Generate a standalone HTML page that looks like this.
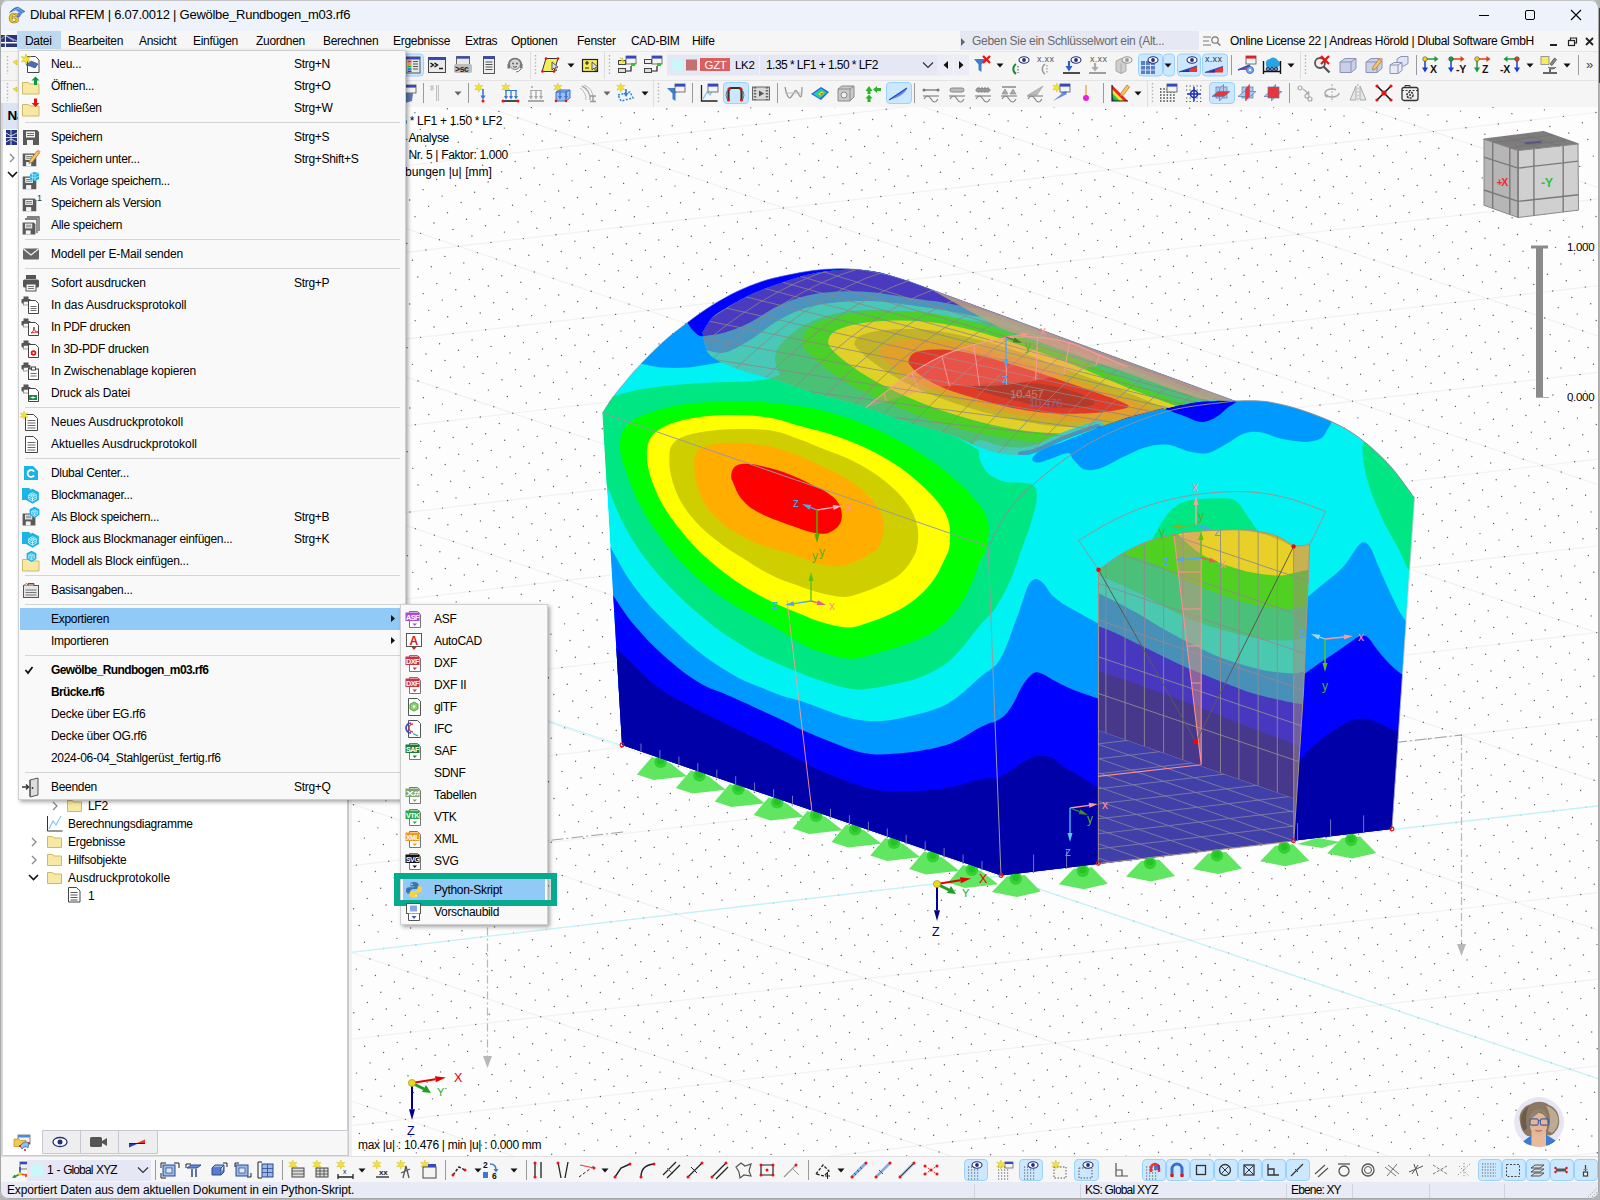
<!DOCTYPE html>
<html><head><meta charset="utf-8"><title>Dlubal RFEM</title>
<style>
*{box-sizing:border-box;margin:0;padding:0}
html,body{width:1600px;height:1200px;overflow:hidden}
body{font-family:"Liberation Sans",sans-serif;font-size:12px;letter-spacing:-.3px;color:#000;background:#f0f0f0;position:relative}
.abs{position:absolute}
#title{left:0;top:0;width:1600px;height:31px;background:#eef3fb}
#title .t{left:30px;top:7px;font-size:13px;letter-spacing:-.26px;white-space:nowrap}
#menubar{left:0;top:31px;width:1600px;height:20px;background:#f6f6f6}
#menubar span{position:absolute;top:3px;white-space:nowrap;font-size:12px}
#tb1{left:0;top:51px;width:1600px;height:29px;background:#f5f5f5;border-top:1px solid #e6e6e6}
#tb2{left:0;top:80px;width:1600px;height:27px;background:#f5f5f5;border-top:1px solid #e4e4e4}
#panel{left:0;top:103px;width:349px;height:1054px;background:#fff;border-left:3px solid #d6d6d6;border-right:2px solid #c9c9c9}
#panelhead{left:3px;top:103px;width:344px;height:26px;background:#dbe5f4}
#view{left:352px;top:107px;width:1246px;height:1049px;background:#fdfdfd;overflow:hidden}
#btb{left:0;top:1156px;width:1600px;height:26px;background:#f6f6f6;border-top:1px solid #e0e0e0}
#status{left:0;top:1182px;width:1600px;height:18px;background:#e8eaf5}
#frame{left:0;top:0;width:1599px;height:1199px;border:1px solid #a8a8a8;border-top-color:#c4c4c4;border-radius:8px;box-shadow:0 0 0 12px #b4b4b4;pointer-events:none;z-index:50}
#status span{position:absolute;top:1px;white-space:nowrap;font-size:12px;letter-spacing:-.14px}
.tree{position:absolute;white-space:nowrap;font-size:12px}
.menu{position:absolute;background:#f9f9f9;border:1px solid #cfcfcf;box-shadow:2px 2px 4px rgba(0,0,0,.35)}
.mi{position:absolute;left:0;height:22px;line-height:22px;white-space:nowrap;font-size:12px}
.mi .l{position:absolute;left:31px;top:0}
.mi .s{position:absolute;left:274px;top:0}
.sep{position:absolute;height:1px;background:#d4d4d4}
.b{font-weight:bold;letter-spacing:-.62px}
</style></head><body>
<div id="title" class="abs">
<svg class="abs" style="left:6px;top:4px" width="22" height="22" viewBox="0 0 22 22"><path d="M3.5 8.5Q7 3.5 12 3l7 4.5q-4 1-6 6l-2.5-1q1-3 3-4.5L10 6Q6 7 3.5 8.5z" fill="#3f7fd6" stroke="#2a5aa8" stroke-width=".5"/><path d="M8 5.5l7 4M11 4l6 4.2M6.5 7q4-2 7-2.5" stroke="#9cc4f0" stroke-width=".6" fill="none"/><text transform="translate(2.8,18.6) scale(1.250,1)" font-size="15" font-weight="bold" letter-spacing="0" fill="#f6d02c" stroke="#9c7e12" stroke-width=".6" font-family="Liberation Sans">6</text></svg>
<div class="abs t">Dlubal RFEM | 6.07.0012 | Gewölbe_Rundbogen_m03.rf6</div>
<svg class="abs" style="left:1470px;top:0" width="130" height="30"><path d="M9 15.5h10" stroke="#000" stroke-width="1"/><rect x="55.5" y="10.5" width="9" height="9" fill="none" stroke="#000" rx="1.5"/><path d="M101 10l10 10M111 10l-10 10" stroke="#000" stroke-width="1.1"/></svg>
</div>
<div id="menubar" class="abs">
<svg class="abs" style="left:0;top:4px" width="17" height="12"><rect x="1" width="16" height="12" fill="#27357e"/><path d="M1 7.7h16" stroke="#fff" stroke-width="1.5"/><path d="M5.4 0v12" stroke="#fff" stroke-width="1"/><path d="M1 4.5L5 .5M6 1l11 5M6 .5l8 5.5" stroke="#cfd6ee" stroke-width=".8" fill="none"/></svg>
<div class="abs" style="left:17px;top:0;width:44px;height:18px;background:#bdd9f0"></div>
<span style="left:25px">Datei</span>
<span style="left:68px">Bearbeiten</span>
<span style="left:139px">Ansicht</span>
<span style="left:193px">Einfügen</span>
<span style="left:256px">Zuordnen</span>
<span style="left:323px">Berechnen</span>
<span style="left:393px">Ergebnisse</span>
<span style="left:465px">Extras</span>
<span style="left:511px">Optionen</span>
<span style="left:577px">Fenster</span>
<span style="left:631px">CAD-BIM</span>
<span style="left:692px">Hilfe</span>
<div class="abs" style="left:960px;top:0;width:239px;height:19px;background:#e6e9f4"></div>
<svg class="abs" style="left:960px;top:6px" width="8" height="10"><path d="M1 1l4 4-4 4z" fill="#666"/></svg>
<span style="left:972px;color:#6a6a6a">Geben Sie ein Schlüsselwort ein (Alt...</span>
<svg class="abs" style="left:1202px;top:3px" width="20" height="15"><path d="M1 3h8M1 7h6M1 11h8" stroke="#777" stroke-width="1.2"/><circle cx="13" cy="6" r="3.2" fill="none" stroke="#777" stroke-width="1.2"/><path d="M15.3 8.5l3 3" stroke="#777" stroke-width="1.4"/></svg>
<span style="left:1230px">Online License 22 | Andreas Hörold | Dlubal Software GmbH</span>
<svg class="abs" style="left:1545px;top:2px" width="55" height="18"><path d="M5 12h7" stroke="#222" stroke-width="2"/><rect x="23.5" y="7.5" width="6" height="5" fill="none" stroke="#222" stroke-width="1.2"/><path d="M25.5 7V5h6v5h-2" fill="none" stroke="#222" stroke-width="1.2"/><path d="M41 5l7 7M48 5l-7 7" stroke="#222" stroke-width="1.8"/></svg>
</div>
<div id="tb1" class="abs"></div><div id="tb2" class="abs"></div>
<div id="panel" class="abs"></div><div id="panelhead" class="abs"><span class="abs" style="left:4.5px;top:5px;font-weight:bold;font-size:13.5px">Navigator - Daten</span></div>
<div id="btb" class="abs"></div>
<div id="status" class="abs">
<span style="left:7px">Exportiert Daten aus dem aktuellen Dokument in ein Python-Skript.</span>
<span style="left:1085px;letter-spacing:-.8px">KS: Global XYZ</span><span style="left:1291px;letter-spacing:-.85px">Ebene: XY</span>
<div class="abs" style="left:974px;top:2px;width:1px;height:14px;background:#cfd4de"></div>
<div class="abs" style="left:1080px;top:2px;width:1px;height:14px;background:#cfd4de"></div>
<div class="abs" style="left:1286px;top:2px;width:1px;height:14px;background:#cfd4de"></div>
<div class="abs" style="left:1352px;top:2px;width:1px;height:14px;background:#cfd4de"></div>
<div class="abs" style="left:1429px;top:2px;width:1px;height:14px;background:#cfd4de"></div>
<div class="abs" style="left:1504px;top:2px;width:1px;height:14px;background:#cfd4de"></div>
</div>
<svg class="abs" style="left:0;top:0;pointer-events:none" width="1600" height="1200"><rect x="6" y="130" width="11" height="15" fill="#27357e"/><path d="M6 137.5h11M11 130v15M6 133l5 3 6-3M6 142l5-3 6 3" stroke="#cfd8ee" stroke-width="1" fill="none"/><path d="M10 154l4 4-4 4" fill="none" stroke="#8a8a8a" stroke-width="1.3"/><path d="M8 172l4.5 4.5 4.5-4.5" fill="none" stroke="#111" stroke-width="1.6"/><path d="M53 802l4 4-4 4" fill="none" stroke="#8a8a8a" stroke-width="1.3"/><g transform="translate(67,798)"><path d="M0.5 2.5h5l1.5 1.5h7.5v9.5h-14z" fill="#f7e9a3" stroke="#cdb96a" stroke-width="1"/></g><path d="M47.5 816v15h15" fill="none" stroke="#333" stroke-width="1"/><path d="M49 829l4-8 3 4 5-9" fill="none" stroke="#86c5f2" stroke-width="1.2"/><path d="M32 838l4 4-4 4" fill="none" stroke="#8a8a8a" stroke-width="1.3"/><g transform="translate(47,834)"><path d="M0.5 2.5h5l1.5 1.5h7.5v9.5h-14z" fill="#f7e9a3" stroke="#cdb96a" stroke-width="1"/></g><path d="M32 856l4 4-4 4" fill="none" stroke="#8a8a8a" stroke-width="1.3"/><g transform="translate(47,852)"><path d="M0.5 2.5h5l1.5 1.5h7.5v9.5h-14z" fill="#f7e9a3" stroke="#cdb96a" stroke-width="1"/></g><path d="M29 875l4.5 4.5 4.5-4.5" fill="none" stroke="#111" stroke-width="1.6"/><g transform="translate(47,870)"><path d="M0.5 2.5h5l1.5 1.5h7.5v9.5h-14z" fill="#f7e9a3" stroke="#cdb96a" stroke-width="1"/></g><g transform="translate(68,887)"><path d="M.5 .5h8l3.5 3.5v11h-11.5z" fill="#fff" stroke="#444"/><path d="M2.5 5.5h7M2.5 8h7M2.5 10.5h7M2.5 13h7" stroke="#444" stroke-width=".9"/></g></svg>
<div class="tree" style="left:88px;top:799px">LF2</div>
<div class="tree" style="left:68px;top:817px">Berechnungsdiagramme</div>
<div class="tree" style="left:68px;top:835px">Ergebnisse</div>
<div class="tree" style="left:68px;top:853px">Hilfsobjekte</div>
<div class="tree" style="left:68px;top:871px"><span style="letter-spacing:0">Ausdruckprotokolle</span></div>
<div class="tree" style="left:88px;top:889px">1</div>
<div id="view" class="abs"></div>
<svg class="abs" style="left:352px;top:107px" width="1246" height="1049" viewBox="352 107 1246 1049">
<defs>
<clipPath id="csil"><path d="M622 745L602.5 413C604.2 410.4 608.8 402.7 612.5 397.5C616.2 392.3 620.8 387 625 382C629.2 377 631.2 374.1 637.5 367.5C643.8 360.9 654.2 350 662.5 342.5C670.8 335 679.2 328.8 687.5 322.5C695.8 316.2 704.2 310.2 712.5 305C720.8 299.8 729.2 295.2 737.5 291.2C745.8 287.2 754.2 283.9 762.5 281.2C770.8 278.5 779.2 276.8 787.5 275C795.8 273.2 804.2 271.6 812.5 270.5C820.8 269.4 829.2 268.8 837.5 268.7C845.8 268.6 854.2 268.9 862.5 270C870.8 271.1 879.9 273.2 887.5 275C895.1 276.8 904.6 280 908 281L1235 401C1240.6 401.2 1256.3 400 1268.8 402C1281.3 404 1296.3 408 1310 413C1323.7 418 1338.2 423.8 1351 432C1363.8 440.2 1376.4 451.5 1387 462.5C1397.6 473.5 1409.9 492.1 1414.5 498L1392 829L1001 875.5Z"/></clipPath>
</defs>
<rect x="352" y="107" width="1246" height="1049" fill="#fdfdfd"/>
<path d="M-6529.8 547.4L3220.2 -598.6M-6340.1 611.8L3409.9 -534.2M-6150.4 676.2L3599.6 -469.8M-5960.7 740.6L3789.3 -405.4M-5771 805L3979 -341M-5581.3 869.4L4168.7 -276.6M-5391.6 933.8L4358.4 -212.2M-5201.9 998.2L4548.1 -147.8M-5012.2 1062.6L4737.8 -83.4M-4822.5 1127L4927.5 -19M-4632.8 1191.4L5117.2 45.4M-4443.1 1255.8L5306.9 109.8M-4253.4 1320.2L5496.6 174.2M-4063.7 1384.6L5686.3 238.6M-3874 1449L5876 303M-3684.3 1513.4L6065.7 367.4M-3494.6 1577.8L6255.4 431.8M-3304.9 1642.2L6445.1 496.2M-3115.2 1706.6L6634.8 560.6M-2925.5 1771L6824.5 625M-2735.8 1835.4L7014.2 689.4M-2546.1 1899.8L7203.9 753.8M-2356.4 1964.2L7393.6 818.2M-2166.7 2028.6L7583.3 882.6M-1977 2093L7773 947M-1787.3 2157.4L7962.7 1011.4M-3225.4 332.4L1327.4 1878M-2900.4 294.2L1652.4 1839.8M-2575.4 256L1977.4 1801.6M-2250.4 217.8L2302.4 1763.4M-1925.4 179.6L2627.4 1725.2M-1600.4 141.4L2952.4 1687M-1275.4 103.2L3277.4 1648.8M-950.4 65L3602.4 1610.6M-625.4 26.8L3927.4 1572.4M-300.4 -11.4L4252.4 1534.2M24.6 -49.6L4577.4 1496M349.6 -87.8L4902.4 1457.8M674.6 -126L5227.4 1419.6M999.6 -164.2L5552.4 1381.4" stroke="#f1f1f1" stroke-width="1.2" fill="none"/>
<path d="M311.9 107.4L1611.9 -45.4M330.9 113.8L1630.9 -39M317.4 124.1L1617.4 -28.7M336.4 130.5L1636.4 -22.3M322.8 140.8L1622.8 -12M341.8 147.2L1609.3 -1.8M328.3 157.5L1628.3 4.7M314.7 167.7L1614.7 14.9M333.7 174.2L1633.7 21.4M320.2 184.4L1620.2 31.6M339.1 190.9L1639.1 38.1M325.6 201.1L1625.6 48.3M312.1 211.4L1612.1 58.6M331.1 217.8L1631.1 65M317.5 228.1L1617.5 75.3M336.5 234.5L1636.5 81.7M323 244.8L1623 92M341.9 251.2L1609.4 102.2M328.4 261.5L1628.4 108.7M314.9 271.7L1614.9 118.9M333.8 278.2L1633.8 125.4M320.3 288.4L1620.3 135.6M339.3 294.9L1639.3 142.1M325.8 305.1L1625.8 152.3M312.2 315.4L1612.2 162.6M331.2 321.8L1631.2 169M317.7 332.1L1617.7 179.3M336.6 338.5L1636.6 185.7M323.1 348.8L1623.1 196M309.6 359.1L1609.6 206.3M328.5 365.5L1628.5 212.7M315 375.8L1615 223M334 382.2L1634 229.4M320.5 392.5L1620.5 239.7M339.4 398.9L1639.4 246.1M325.9 409.2L1625.9 256.4M312.4 419.4L1612.4 266.6M331.3 425.9L1631.3 273.1M317.8 436.1L1617.8 283.3M336.8 442.6L1636.8 289.8M323.2 452.8L1623.2 300M309.7 463.1L1609.7 310.3M328.7 469.5L1628.7 316.7M315.2 479.8L1615.2 327M334.1 486.2L1634.1 333.4M320.6 496.5L1620.6 343.7M339.6 502.9L1639.6 350.1M326 513.2L1626 360.4M312.5 523.4L1612.5 370.6M331.5 529.9L1631.5 377.1M317.9 540.1L1617.9 387.3M336.9 546.6L1636.9 393.8M323.4 556.8L1623.4 404M309.9 567.1L1609.8 414.3M328.8 573.5L1628.8 420.7M315.3 583.8L1615.3 431M334.3 590.2L1634.3 437.4M320.7 600.5L1620.7 447.7M339.7 606.9L1639.7 454.1M326.2 617.2L1626.2 464.4M312.6 627.5L1612.6 474.7M331.6 633.9L1631.6 481.1M318.1 644.2L1618.1 491.4M337.1 650.6L1637.1 497.8M323.5 660.9L1623.5 508.1M310 671.1L1610 518.3M329 677.6L1629 524.8M315.4 687.8L1615.4 535M334.4 694.3L1634.4 541.5M320.9 704.5L1620.9 551.7M339.8 711L1639.8 558.2M326.3 721.2L1626.3 568.4M312.8 731.5L1612.8 578.7M331.8 737.9L1631.8 585.1M318.2 748.2L1618.2 595.4M337.2 754.6L1637.2 601.8M323.7 764.9L1623.7 612.1M310.1 775.1L1610.1 622.3M329.1 781.6L1629.1 628.8M315.6 791.8L1615.6 639M334.5 798.3L1634.5 645.5M321 808.5L1621 655.7M340 815L1640 662.2M326.5 825.2L1626.5 672.4M312.9 835.5L1612.9 682.7M331.9 841.9L1631.9 689.1M318.4 852.2L1618.4 699.4M337.3 858.6L1637.3 705.8M323.8 868.9L1623.8 716.1M310.3 879.2L1610.3 726.4M329.2 885.6L1629.2 732.8M315.7 895.9L1615.7 743.1M334.7 902.3L1634.7 749.5M321.1 912.6L1621.2 759.8M340.1 919L1640.1 766.2M326.6 929.3L1626.6 776.5M313.1 939.5L1613.1 786.7M332 946L1632 793.2M318.5 956.2L1618.5 803.4M337.5 962.7L1637.5 809.9M323.9 972.9L1623.9 820.1M310.4 983.2L1610.4 830.4M329.4 989.6L1629.4 836.8M315.8 999.9L1615.8 847.1M334.8 1006.3L1634.8 853.5M321.3 1016.6L1621.3 863.8M340.3 1023L1640.3 870.2M326.7 1033.3L1626.7 880.5M313.2 1043.5L1613.2 890.7M332.2 1050L1632.2 897.2M318.6 1060.2L1618.6 907.4M337.6 1066.7L1637.6 913.9M324.1 1076.9L1624.1 924.1M310.5 1087.2L1610.5 934.4M329.5 1093.6L1629.5 940.8M316 1103.9L1616 951.1M335 1110.3L1635 957.5M321.4 1120.6L1621.4 967.8M340.4 1127L1640.4 974.2M326.9 1137.3L1626.9 984.5M313.3 1147.6L1613.3 994.8M332.3 1154L1632.3 1001.2M318.8 1164.3L1618.8 1011.5M337.8 1170.7L1637.8 1017.9M324.2 1181L1624.2 1028.2M310.7 1191.2L1610.7 1038.4M329.7 1197.7L1629.7 1044.9M316.1 1207.9L1616.1 1055.1M335.1 1214.4L1635.1 1061.6M321.6 1224.6L1621.6 1071.8M340.5 1231.1L1608 1082.1M327 1241.3L1627 1088.5M313.5 1251.6L1613.5 1098.8M332.4 1258L1632.4 1105.2M318.9 1268.3L1618.9 1115.5M337.9 1274.7L1637.9 1121.9M324.4 1285L1624.4 1132.2M310.8 1295.2L1610.8 1142.4M329.8 1301.7L1629.8 1148.9M316.3 1311.9L1616.3 1159.1" stroke="#5c5c5c" stroke-width="1.4" stroke-linecap="round" stroke-dasharray="0 32.724" fill="none"/>
<path d="M352 952.3L1001 876M1392 829.5L1600 805.6M1001 876L1600 1079.4M622 745.5L352 655.7" stroke="#bcf3f9" stroke-width="1.1" fill="none"/>
<path d="M487.5 847.5V1056" stroke="#b8b8b8" stroke-width="1.2" stroke-dasharray="8 3 2 3"/><path d="M483 1056h9l-4.5 12z" fill="#b8b8b8"/>
<path d="M1461.5 737V944" stroke="#b8b8b8" stroke-width="1.2" stroke-dasharray="8 3 2 3"/><path d="M1457 944h9l-4.5 12z" fill="#b8b8b8"/>
<path d="M1395 742.5L1461.5 735" stroke="#a0a0a0" stroke-width="1" stroke-dasharray="12 3 2 3"/><path d="M623 832L487.5 847.5" stroke="#a0a0a0" stroke-width="1" stroke-dasharray="12 3 2 3"/>
<polygon points="1297,844 1318,838 1340,842 1322,848" fill="#60e660"/>
<polygon points="651.9,756.9 670,763.1 686.9,776.3 653.7,780 636.9,774.4" fill="#60e660"/>
<circle cx="660.6" cy="761.9" r="6.2" fill="#34d034"/><circle cx="660.6" cy="760.9" r="3.5" fill="#22c522"/>
<polygon points="690.8,770.4 708.9,776.6 725.8,789.8 692.6,793.5 675.8,787.9" fill="#60e660"/>
<circle cx="699.5" cy="775.4" r="6.2" fill="#34d034"/><circle cx="699.5" cy="774.4" r="3.5" fill="#22c522"/>
<polygon points="729.7,783.9 747.8,790.1 764.7,803.3 731.5,807 714.7,801.4" fill="#60e660"/>
<circle cx="738.4" cy="788.9" r="6.2" fill="#34d034"/><circle cx="738.4" cy="787.9" r="3.5" fill="#22c522"/>
<polygon points="768.6,797.4 786.7,803.6 803.6,816.8 770.4,820.5 753.6,814.9" fill="#60e660"/>
<circle cx="777.3" cy="802.4" r="6.2" fill="#34d034"/><circle cx="777.3" cy="801.4" r="3.5" fill="#22c522"/>
<polygon points="807.5,810.9 825.6,817.1 842.5,830.3 809.3,834 792.5,828.4" fill="#60e660"/>
<circle cx="816.2" cy="815.9" r="6.2" fill="#34d034"/><circle cx="816.2" cy="814.9" r="3.5" fill="#22c522"/>
<polygon points="846.4,824.4 864.5,830.6 881.4,843.8 848.2,847.5 831.4,841.9" fill="#60e660"/>
<circle cx="855.1" cy="829.4" r="6.2" fill="#34d034"/><circle cx="855.1" cy="828.4" r="3.5" fill="#22c522"/>
<polygon points="885.3,837.9 903.4,844.1 920.3,857.3 887.1,861 870.3,855.4" fill="#60e660"/>
<circle cx="894" cy="842.9" r="6.2" fill="#34d034"/><circle cx="894" cy="841.9" r="3.5" fill="#22c522"/>
<polygon points="924.2,851.4 942.3,857.6 959.2,870.8 926,874.5 909.2,868.9" fill="#60e660"/>
<circle cx="932.9" cy="856.4" r="6.2" fill="#34d034"/><circle cx="932.9" cy="855.4" r="3.5" fill="#22c522"/>
<polygon points="963.1,864.9 981.2,871.1 998.1,884.3 964.9,888 948.1,882.4" fill="#60e660"/>
<circle cx="971.8" cy="869.9" r="6.2" fill="#34d034"/><circle cx="971.8" cy="868.9" r="3.5" fill="#22c522"/>
<polygon points="1006.8,876.5 1024.8,875 1040.8,891.5 1016.8,897 991.8,892" fill="#60e660"/>
<circle cx="1015.8" cy="878.5" r="6.2" fill="#34d034"/><circle cx="1015.8" cy="877.5" r="3.5" fill="#22c522"/>
<polygon points="1073.8,868.8 1091.8,867.3 1107.8,883.8 1083.8,889.3 1058.8,884.3" fill="#60e660"/>
<circle cx="1082.8" cy="870.8" r="6.2" fill="#34d034"/><circle cx="1082.8" cy="869.8" r="3.5" fill="#22c522"/>
<polygon points="1141,861.1 1159,859.6 1175,876.1 1151,881.6 1126,876.6" fill="#60e660"/>
<circle cx="1150" cy="863.1" r="6.2" fill="#34d034"/><circle cx="1150" cy="862.1" r="3.5" fill="#22c522"/>
<polygon points="1208,853.4 1226,851.9 1242,868.4 1218,873.9 1193,868.9" fill="#60e660"/>
<circle cx="1217" cy="855.4" r="6.2" fill="#34d034"/><circle cx="1217" cy="854.4" r="3.5" fill="#22c522"/>
<polygon points="1275.2,845.7 1293.2,844.2 1309.2,860.7 1285.2,866.2 1260.2,861.2" fill="#60e660"/>
<circle cx="1284.2" cy="847.7" r="6.2" fill="#34d034"/><circle cx="1284.2" cy="846.7" r="3.5" fill="#22c522"/>
<polygon points="1342.2,838 1360.2,836.5 1376.2,853 1352.2,858.5 1327.2,853.5" fill="#60e660"/>
<circle cx="1351.2" cy="840" r="6.2" fill="#34d034"/><circle cx="1351.2" cy="839" r="3.5" fill="#22c522"/>
<g clip-path="url(#csil)">
<path d="M622 745L602.5 413C604.2 410.4 608.8 402.7 612.5 397.5C616.2 392.3 620.8 387 625 382C629.2 377 631.2 374.1 637.5 367.5C643.8 360.9 654.2 350 662.5 342.5C670.8 335 679.2 328.8 687.5 322.5C695.8 316.2 704.2 310.2 712.5 305C720.8 299.8 729.2 295.2 737.5 291.2C745.8 287.2 754.2 283.9 762.5 281.2C770.8 278.5 779.2 276.8 787.5 275C795.8 273.2 804.2 271.6 812.5 270.5C820.8 269.4 829.2 268.8 837.5 268.7C845.8 268.6 854.2 268.9 862.5 270C870.8 271.1 879.9 273.2 887.5 275C895.1 276.8 904.6 280 908 281L1235 401C1240.6 401.2 1256.3 400 1268.8 402C1281.3 404 1296.3 408 1310 413C1323.7 418 1338.2 423.8 1351 432C1363.8 440.2 1376.4 451.5 1387 462.5C1397.6 473.5 1409.9 492.1 1414.5 498L1392 829L1001 875.5Z" fill="#00f2f2"/>
<path d="M978.7 450C978.9 451.7 978.4 456.1 980 460C981.6 463.9 984.1 469.9 988.2 473.5C992.3 477.1 998.7 480.1 1004.7 481.7C1010.7 483.3 1019 482.1 1024 483C1029 483.9 1032.9 484.2 1035 487.2C1037.1 490.2 1037.1 495 1036.4 501C1035.7 507 1033.4 514.8 1030.9 523C1028.4 531.2 1024.7 540.9 1021.2 550.5C1017.8 560.1 1013.6 572.6 1010.2 580.7C1006.8 588.8 1002.5 596 1001 599L1000 600C999.2 601.5 997.1 605.8 995 608.7C992.9 611.6 989.8 615 987.5 617.5C985.2 620 983.9 620.6 981.2 623.7C978.5 626.8 974.7 631.8 971.2 636.2C967.7 640.6 964 645.6 960 650C956 654.4 952.3 658.8 947.5 662.5C942.7 666.2 937 669.6 931.2 672.5C925.4 675.4 919.8 677.8 912.5 680C905.2 682.2 895.8 684 887.5 685.6C879.2 687.2 869.8 689.1 862.5 689.4C855.2 689.7 851 689.1 843.7 687.5C836.4 685.9 826 682.4 818.7 680C811.4 677.6 807.3 675.9 800 673C792.7 670.1 782.3 665.7 775 662.5C767.7 659.3 762.5 657 756.2 653.7C750 650.4 743.8 646.5 737.5 642.5C731.2 638.5 725 634.6 718.7 630C712.5 625.4 706 620 700 615C694 610 688.5 605.2 683 600C677.5 594.8 672.2 589.5 667 584C661.8 578.5 656.5 572.5 652 567C647.5 561.5 644.1 557.2 640 551.2C635.9 545.2 631.2 537.9 627.5 531.2C623.8 524.5 620.4 517.6 617.5 511.2C614.6 504.8 612.3 497.7 610 492.5C607.7 487.3 604.8 482.1 603.7 480L590 482L590 396L613.7 396.2C617.7 395.2 627.3 391.9 637.5 390C647.7 388.1 662.5 386.2 675 385C687.5 383.8 700 383.1 712.5 382.5C725 381.9 739.6 381.9 750 381.2C760.4 380.4 770.8 378.5 775 378L775 380C781.2 382.1 797.5 387.9 812.5 392.5C827.5 397.1 850.4 402.9 865 407.5C879.6 412.1 885.8 415.4 900 420C914.2 424.6 936.9 430 950 435C963.1 440 973.9 447.5 978.7 450Z" fill="#00e682"/>
<path d="M641.2 363.7C644.8 364.3 654.8 366.9 662.5 367.5C670.2 368.1 679.2 368.1 687.5 367.5C695.8 366.9 705 364.9 712.5 363.7C720 362.4 724.6 361.9 732.5 360C740.4 358.1 755.4 353.3 760 352L900 300L900 250L600 250L600 363Z" fill="#0099ff"/>
<path d="M687.5 322.5C688.3 323.8 690 327.7 692.5 330C695 332.3 697.1 335.8 702.5 336.2C707.9 336.6 717.1 334.8 725 332.5C732.9 330.2 745.8 324.2 750 322.5L920 300L920 250L680 250Z" fill="#0000ff"/>
<path d="M590 537L606 540C606.3 540.4 606.3 539.6 608 542.5C609.7 545.4 613.2 552.1 616.2 557.5C619.2 562.9 622.5 569.2 626.2 575C630 580.8 634.3 586.9 638.7 592.5C643.1 598.1 647.5 603.3 652.5 608.7C657.5 614.1 662.9 619.4 668.7 625C674.5 630.6 681.2 637.1 687.5 642.5C693.8 647.9 700 652.9 706.2 657.5C712.5 662.1 718.8 666.2 725 670C731.2 673.8 737.5 677.5 743.7 680.5C750 683.5 756.3 685.5 762.5 688C768.7 690.5 774.8 693.4 781 695.5C787.2 697.6 793.7 698.8 800 700.8C806.3 702.8 812.5 705.2 818.7 707.5C825 709.8 831.2 712.4 837.5 714.4C843.8 716.4 850 718.3 856.2 719.4C862.5 720.5 868.8 721.2 875 721.2C881.2 721.2 887.5 720.3 893.7 719.4C900 718.5 906.2 717.1 912.5 715.6C918.8 714.1 925.4 712.6 931.2 710.6C937 708.6 942.7 706.3 947.5 703.7C952.3 701.1 956.5 697.7 960 695C963.5 692.3 965.2 690.6 968.7 687.5C972.2 684.4 977.2 679.5 981.2 676.2C985.2 673 989.4 670.5 992.4 668C995.4 665.5 996.6 664.8 999 661C1001.4 657.2 1004.7 650.5 1007 645C1009.3 639.5 1011 633.5 1013 628C1015 622.5 1017.2 617.2 1019 612C1020.8 606.8 1022.5 601.3 1024 597C1025.5 592.7 1026.5 588.8 1028 586C1029.5 583.2 1031.3 581.1 1033 580C1034.7 578.9 1036.2 578.7 1038 579.4C1039.8 580.1 1041.8 581.6 1044 584C1046.2 586.4 1048.7 591.3 1051 594C1053.3 596.7 1055.7 598.2 1058 600C1060.3 601.8 1061.2 602.7 1065 605C1068.8 607.3 1075.5 610.9 1081 614C1086.5 617.1 1095.3 621.9 1098.2 623.5L1300 602C1301.2 601.2 1303.3 600.3 1307.3 597.2C1311.2 594.1 1317.8 588.5 1323.7 583.5C1329.7 578.5 1337.5 573 1343 567C1348.5 561 1353.3 551.8 1356.7 547.7C1360.1 543.6 1361.3 542.2 1363.6 542.2C1365.9 542.2 1368 543.6 1370.5 547.7C1373 551.8 1375.5 559.7 1378.7 567C1381.9 574.3 1386 583.9 1389.7 591.7C1393.4 599.5 1397.3 608 1400.7 613.7C1404.1 619.4 1408.5 624 1410 626L1430 626L1430 900L590 900Z" fill="#0099ff"/>
<path d="M590 589L611 592C611.4 592.7 611.8 593.4 613.5 596C615.2 598.6 618.5 603.5 621.2 607.5C624 611.5 627.3 616.5 630 620C632.7 623.5 633.8 624.5 637.5 628.7C641.2 632.9 647.3 639.8 652.5 645C657.7 650.2 662.9 655 668.7 660C674.5 665 681.2 670.6 687.5 675C693.8 679.4 700 683.3 706.2 686.5C712.5 689.7 719.8 691.8 725 694C730.2 696.2 731.2 696.7 737.5 699.5C743.8 702.3 754.2 707.2 762.5 711C770.8 714.8 781.2 719.5 787.5 722.5C793.8 725.5 794.8 726.6 800 729C805.2 731.4 812.5 734.3 818.7 736.9C825 739.5 831.2 742 837.5 744.4C843.8 746.8 850 749.5 856.2 751.2C862.5 752.9 868.8 754 875 754.4C881.2 754.8 887.5 754.1 893.7 753.7C900 753.3 906.2 752.7 912.5 751.9C918.8 751.1 925 750.1 931.2 748.7C937.5 747.3 944.4 745.8 950 743.7C955.6 741.6 960.4 738.7 965 736.2C969.6 733.7 973.3 730.9 977.5 728.7C981.7 726.5 987.1 724.3 990 723.1C992.9 721.9 992.5 723.1 995 721.7C997.5 720.4 1002 718 1005 715C1008 712 1010.3 708.5 1013 704C1015.7 699.5 1018.5 692.3 1021 688C1023.5 683.7 1026 680.4 1028 678C1030 675.6 1031.3 674.4 1033 673.5C1034.7 672.6 1036 672.1 1038 672.4C1040 672.6 1042.5 673.7 1045 675C1047.5 676.3 1049 677.8 1053 680C1057 682.2 1063.7 685.7 1069 688C1074.3 690.3 1080.1 692.2 1085 694C1089.9 695.8 1096 697.8 1098.2 698.5L1296 680C1297.2 679.2 1299.4 677.7 1303.1 675C1306.8 672.3 1312.9 667.7 1318.2 664C1323.5 660.3 1329.7 656.4 1334.7 653C1339.8 649.6 1344.8 646.1 1348.5 643.5C1352.2 640.9 1354.7 638.8 1357 637.5C1359.3 636.2 1360.6 635.4 1362.5 635.5C1364.4 635.6 1366 635.6 1368.5 638C1371 640.4 1374 645.7 1377.5 650C1381 654.3 1385.8 660.1 1389.7 664C1393.6 667.9 1397.3 670.9 1400.7 673.6C1404.1 676.3 1408.5 678.9 1410 680L1430 680L1430 900L590 900Z" fill="#0000ff"/>
<path d="M590 643L615 646C615.5 646.7 615.3 647.2 618 650C620.7 652.8 626.9 658.3 631.2 662.5C635.5 666.7 639 670.7 643.7 675C648.4 679.3 654.3 684.7 659.5 688.5C664.7 692.3 668.2 694.2 675 698C681.8 701.8 691.7 706.8 700 711C708.3 715.2 716.7 719.4 725 723.5C733.3 727.6 741.7 731.5 750 735.5C758.3 739.5 766.7 743.4 775 747.5C783.3 751.6 792.7 756.2 800 760C807.3 763.8 812.5 767.1 818.7 770C825 772.9 831.2 775.1 837.5 777.5C843.8 779.9 850 782.4 856.2 784.4C862.5 786.4 868.8 788.2 875 789.4C881.2 790.6 887.5 791.2 893.7 791.5C900 791.8 906.2 791.5 912.5 791.2C918.8 791 925 790.6 931.2 790C937.5 789.4 944.4 788.5 950 787.5C955.6 786.5 960.4 785 965 783.7C969.6 782.5 973.3 780.9 977.5 780C981.7 779.1 986.8 778.4 990 778.1C993.2 777.9 993.1 779.6 996.5 778.5C999.9 777.4 1005.6 774 1010.2 771.2C1014.8 768.4 1019.4 764.1 1024 761.6C1028.6 759.1 1033.1 756.8 1037.7 756.1C1042.3 755.4 1047.4 755.9 1051.5 757.5C1055.6 759.1 1058.4 763 1062.5 765.7C1066.6 768.5 1071.6 771.2 1076.2 774C1080.8 776.8 1086.3 779.9 1090 782.2C1093.7 784.5 1096.8 786.8 1098.2 787.7L1290 770C1291 769.1 1292.9 767.9 1296.2 764.4C1299.5 760.9 1305 754 1310 749.2C1315 744.4 1321 739.6 1326.5 735.5C1332 731.4 1338 727.2 1343 724.5C1348 721.8 1352.6 719.9 1356.7 719C1360.8 718.1 1364 718.3 1367.7 719C1371.4 719.7 1375 721.5 1378.7 723.1C1382.4 724.7 1386.5 727.2 1389.7 728.6C1392.9 730 1394.6 730.5 1398 731.4C1401.4 732.3 1408 733.6 1410 734L1430 734L1430 900L590 900Z" fill="#0000a8"/>
<path d="M620 443.7C620.2 439.6 620.6 434.9 622.5 431.2C624.4 427.4 627.7 423.9 631.2 421.2C634.7 418.5 638.5 417.1 643.7 415C648.9 412.9 655.2 410.6 662.5 408.7C669.8 406.8 679.2 404.8 687.5 403.7C695.8 402.6 702.1 402.3 712.5 401.9C722.9 401.5 735.4 400.5 750 401.2C764.6 401.9 787.5 404.5 800 406.2C812.5 407.9 816.7 409.1 825 411.2C833.3 413.3 841.7 415.8 850 418.7C858.3 421.6 866.7 424.9 875 428.7C883.3 432.4 891.7 436.6 900 441.2C908.3 445.8 917.7 451.4 925 456.2C932.3 461 937.5 465 943.7 470C950 475 956.9 480.8 962.5 486.2C968.1 491.6 973.5 497.5 977.5 502.5C981.5 507.5 984.3 511.4 986.2 516.2C988.1 521 988.8 525.6 988.7 531.2C988.6 536.8 987 545 985.5 550C984 555 981.8 557 980 561.2C978.2 565.4 977.1 569.8 975 575C972.9 580.2 970.4 586.9 967.5 592.5C964.6 598.1 961.5 603.5 957.5 608.7C953.5 613.9 949.1 619.1 943.7 623.7C938.3 628.3 932.3 632.5 925 636.2C917.7 640 908.3 643.3 900 646.2C891.7 649.1 883.3 651.6 875 653.7C866.7 655.8 859.4 659.1 850 658.7C840.6 658.3 827 653.8 818.7 651.2C810.4 648.6 805.2 645.7 800 643C794.8 640.3 792.7 638.2 787.5 635C782.3 631.8 775.2 627.5 769 624C762.8 620.5 756.3 617.5 750 614C743.7 610.5 737.3 607 731 603C724.7 599 718.5 595 712 590C705.5 585 698.7 579.3 692 573C685.3 566.7 677.3 558.1 672 552C666.7 545.9 664.1 541.8 660 536.2C655.9 530.7 651.2 524.7 647.5 518.7C643.8 512.7 640.4 506 637.5 500C634.6 494 632 487.5 630 482.5C628 477.5 627.1 474.4 625.6 470C624.1 465.6 621.9 460.4 621 456C620.1 451.6 619.8 447.8 620 443.7Z" fill="#00ff00" />
<path d="M646.9 456.2C646.8 451.8 647 447.4 648.1 443.7C649.2 439.9 650.9 436.6 653.7 433.7C656.5 430.8 660.4 428.4 665 426.2C669.6 424 675.4 422.2 681.2 420.6C687 419.1 692.7 417.8 700 416.9C707.3 416 716.7 415.2 725 415C733.3 414.8 741.7 415 750 415.6C758.3 416.2 766.7 417 775 418.7C783.3 420.4 791.7 423.7 800 426C808.3 428.3 816.7 430 825 432.5C833.3 435 841.7 437.9 850 441.2C858.3 444.5 866.7 448.1 875 452.5C883.3 456.9 892.7 462.5 900 467.5C907.3 472.5 912.9 477.3 918.7 482.5C924.5 487.7 930.6 493.7 935 498.7C939.4 503.7 942.6 508.1 945 512.5C947.4 516.9 948.6 520.8 949.4 525C950.2 529.2 950.1 533.3 950 537.5C949.9 541.7 949.8 546 948.7 550C947.7 554 945.6 557.2 943.7 561.2C941.8 565.2 940.2 569.3 937.5 573.7C934.8 578.1 931.7 582.9 927.5 587.5C923.3 592.1 918.1 597 912.5 601.2C906.9 605.4 901 609 893.7 612.5C886.4 616 876.4 620 868.7 622.5C861 625 855.8 627.7 847.5 627.5C839.2 627.3 826.6 623.5 818.7 621.2C810.8 618.9 806.3 616.2 800 613.7C793.7 611.2 787.2 608.8 781 606C774.8 603.2 768.7 600.2 762.5 597C756.3 593.8 750.1 590.3 744 586.5C737.9 582.7 731.7 578.2 726 574C720.3 569.8 715 565.3 710 561C705 556.7 700.6 552.8 696 548C691.4 543.2 686.8 537.8 682.5 532.5C678.2 527.2 673.8 521.6 670 516.2C666.2 510.8 662.9 505.6 660 500C657.1 494.4 654.4 487.5 652.5 482.5C650.6 477.5 649.6 474.4 648.7 470C647.8 465.6 647 460.6 646.9 456.2Z" fill="#ffff00" />
<path d="M669.4 458.7C669.5 454.9 669.2 450.7 670.6 447.5C672 444.3 674.3 441.6 677.5 439.4C680.7 437.2 685.2 435.8 690 434.4C694.8 433 700.4 432 706.2 431.2C712 430.4 717.7 429.8 725 429.4C732.3 429 741.7 428.7 750 429C758.3 429.3 766.7 429.5 775 431.2C783.3 432.9 791.7 436.4 800 439.4C808.3 442.4 816.7 446.1 825 449.4C833.3 452.7 841.7 455.3 850 459.4C858.3 463.4 867.7 468.8 875 473.7C882.3 478.6 888.5 483.9 893.7 488.7C898.9 493.5 902.9 498.1 906.2 502.5C909.5 506.9 911.8 510.8 913.7 515C915.6 519.2 916.8 523.5 917.5 527.5C918.2 531.5 918.3 535 918.1 538.7C917.9 542.5 917.2 547.1 916.5 550C915.8 552.9 915.2 553.5 913.7 556.2C912.2 558.9 910.2 562.9 907.5 566.2C904.8 569.5 901.9 573.1 897.5 576.2C893.1 579.3 887 582.3 881.2 585C875.4 587.7 868.8 590.5 862.5 592.5C856.2 594.5 851 596.9 843.7 596.9C836.4 596.9 826 594.3 818.7 592.5C811.4 590.7 806.3 588.4 800 586.2C793.7 584 787.2 582.1 781 579.5C774.8 576.9 768.5 573.8 762.5 570.5C756.5 567.2 750.1 562.7 745 559.5C739.9 556.3 736.6 554.5 732 551.5C727.4 548.5 722.4 545 717.5 541.2C712.6 537.4 707.1 533.1 702.5 528.7C697.9 524.3 693.8 519.8 690 515C686.2 510.2 682.7 505 680 500C677.3 495 675.4 490 673.7 485C672 480 670.7 474.4 670 470C669.3 465.6 669.3 462.4 669.4 458.7Z" fill="#cece00" />
<path d="M694.4 467.5C694.2 463.1 694.1 459.3 695 456.2C695.9 453.1 697.1 450.7 700 448.7C702.9 446.7 707.3 445.4 712.5 444.4C717.7 443.4 725 442.8 731.2 442.7C737.5 442.6 742.7 442.9 750 443.7C757.3 444.5 766.7 445.4 775 447.5C783.3 449.6 792.7 453.3 800 456.2C807.3 459.1 812.5 462.1 818.7 465C825 467.9 831.2 470.4 837.5 473.7C843.8 477 850.8 481 856.2 485C861.6 489 866.2 493.6 870 497.5C873.8 501.4 876.5 504.9 878.7 508.7C880.9 512.5 882.3 516.5 883.1 520C883.9 523.5 884 526.7 883.7 530C883.4 533.3 882.3 536.7 881.2 540C880.1 543.3 878.9 547.7 877 550C875.1 552.3 873.5 551.8 870 553.7C866.5 555.6 861.6 559.1 856.2 561.2C850.8 563.3 843.8 565.8 837.5 566.2C831.2 566.6 825 565.2 818.7 563.7C812.5 562.2 804.6 559 800 557.3C795.4 555.6 795.8 555.1 791.2 553.7C786.6 552.3 778.5 550.6 772.5 548.7C766.5 546.8 760.8 545 755 542.5C749.2 540 742.9 536.8 737.5 533.7C732.1 530.6 727.1 527.5 722.5 523.7C717.9 520 713.5 515.6 710 511.2C706.5 506.8 703.5 502.3 701.2 497.5C698.9 492.7 697.3 487.5 696.2 482.5C695.1 477.5 694.6 471.9 694.4 467.5Z" fill="#ffae00" />
<path d="M731.2 477.5C731.1 475.4 731.5 472.1 732.5 470C733.5 467.9 735 466.1 737.5 465C740 463.9 743.3 463.5 747.5 463.7C751.7 463.9 756.9 464.9 762.5 466.2C768.1 467.4 775 469.1 781.2 471.2C787.5 473.3 794.8 476.4 800 478.7C805.2 481 808.3 482.9 812.5 485C816.7 487.1 821.2 488.9 825 491.2C828.8 493.5 832.5 496.2 835 498.7C837.5 501.2 838.9 503.5 840 506.2C841.1 508.9 841.9 512.1 841.9 515C841.9 517.9 841.4 521.2 840 523.7C838.6 526.2 836.2 528.3 833.7 530C831.2 531.7 828.5 533.3 825 533.7C821.5 534.1 816.7 533.3 812.5 532.5C808.3 531.7 805 530.4 800 528.7C795 527 788.5 524.8 782.5 522.5C776.5 520.2 769.3 517.7 763.7 515C758.1 512.3 752.9 509.5 748.7 506.2C744.5 502.9 741.3 498.9 738.7 495C736.1 491.1 734.4 485.4 733.1 482.5C731.9 479.6 731.3 479.6 731.2 477.5Z" fill="#ff0000" />
<path d="M1032.3 458.4C1033.2 456.1 1038.2 451.5 1043.3 448.8C1048.3 446 1054.7 444.9 1062.5 441.9C1070.3 438.9 1081.8 434.3 1090 430.9C1098.3 427.4 1104.7 424 1112 421.3C1119.3 418.5 1126.2 416.9 1134 414.4C1141.8 411.9 1150.1 408.6 1158.8 406.1C1167.5 403.6 1174.8 401.1 1186.3 399.3C1197.7 397.4 1213.8 395.6 1227.5 395.1C1241.3 394.7 1255 394.4 1268.8 396.5C1282.5 398.6 1299.7 403.8 1310 407.5C1320.3 411.2 1327.9 414.6 1330.7 418.5C1333.4 422.4 1328.4 427.4 1326.5 430.9C1324.7 434.3 1323.3 437.3 1319.7 439.1C1316 441 1310.7 441.9 1304.5 441.9C1298.3 441.9 1289.9 440.7 1282.5 439.1C1275.2 437.5 1266.9 433.2 1260.5 432.3C1254.1 431.3 1249.5 431.8 1244 433.6C1238.5 435.5 1233.5 440 1227.5 443.3C1221.6 446.5 1214.7 451.5 1208.3 452.9C1201.9 454.3 1195.9 452.9 1189 451.5C1182.1 450.1 1174.4 445.3 1167 444.6C1159.7 443.9 1152.4 445.3 1145 447.4C1137.7 449.4 1130.3 453.6 1123 457C1115.7 460.4 1107.4 465.9 1101 468C1094.6 470.1 1089.1 470.8 1084.5 469.4C1079.9 468 1076.3 462.5 1073.5 459.8C1070.8 457 1071.7 453.1 1068 452.9C1064.3 452.7 1056.5 456.8 1051.5 458.4C1046.5 460 1041 462.5 1037.8 462.5C1034.5 462.5 1031.3 460.7 1032.3 458.4Z" fill="#0099ff" />
<path d="M1162.9 407.5C1165.2 409.8 1177.3 413.4 1183.5 415.8C1189.7 418.1 1195 421.3 1200 421.8C1205.1 422.3 1209.4 420.7 1213.8 418.5C1218.1 416.3 1222.5 412.1 1226.1 408.9C1229.8 405.7 1240.1 401.3 1235.8 399.3C1231.4 397.2 1211 396 1200 396.5C1189 397 1176 400.2 1169.8 402C1163.6 403.8 1160.6 405.2 1162.9 407.5Z" fill="#0000ff" />
<path d="M1365 441.9C1368.9 441.4 1377.9 450.4 1387 459.8C1396.2 469.2 1414.5 479.5 1420 498.3C1425.5 517.1 1421.9 560.6 1420 572.5C1418.2 584.4 1412.7 573.9 1409 569.8C1405.4 565.6 1402.2 555.6 1398 547.8C1393.9 540 1388.9 532.6 1384.3 523C1379.7 513.4 1374 500.1 1370.5 490C1367.1 479.9 1364.6 470.5 1363.7 462.5C1362.7 454.5 1361.1 442.3 1365 441.9Z" fill="#00e682" />
<path d="M1150 545C1142 544.1 1150.4 543 1152.2 539.5C1154 536 1157.8 528.7 1161 523.7C1164.2 518.7 1167.7 513.3 1171.5 509.7C1175.3 506.1 1178.8 503.7 1183.7 501.9C1188.7 500.1 1193.9 499.5 1201.2 498.9C1208.5 498.3 1221.4 497.8 1227.5 498.4C1233.6 499 1234.8 499.9 1238 502.7C1241.2 505.5 1243.8 510.8 1246.7 515C1249.6 519.2 1253 523.8 1255.5 528C1258 532.2 1271.2 537.2 1262 540C1252.8 542.8 1218.7 544.2 1200 545C1181.3 545.8 1158 545.9 1150 545Z" fill="#00e682" />
</g>
<clipPath id="cdoor"><path d="M1098.5 569.8C1102.5 567.1 1114.1 558.3 1122.5 553.5C1130.9 548.7 1140 544.4 1148.7 541.2C1157.5 538 1166.2 535.9 1175 534.2C1183.8 532.5 1192.5 531.8 1201.2 531.1C1210 530.4 1218.8 530 1227.5 529.9C1236.2 529.8 1245.5 529.7 1253.7 530.7C1261.9 531.7 1269.8 533.4 1276.5 536C1283.2 538.6 1290.8 544.8 1293.6 546.5L1309.7 544.7L1303.6 690L1293.8 841L1098.3 863.6Z"/></clipPath>
<g clip-path="url(#cdoor)">
<path d="M1098.5 569.8C1102.5 567.1 1114.1 558.3 1122.5 553.5C1130.9 548.7 1140 544.4 1148.7 541.2C1157.5 538 1166.2 535.9 1175 534.2C1183.8 532.5 1192.5 531.8 1201.2 531.1C1210 530.4 1218.8 530 1227.5 529.9C1236.2 529.8 1245.5 529.7 1253.7 530.7C1261.9 531.7 1269.8 533.4 1276.5 536C1283.2 538.6 1290.8 544.8 1293.6 546.5L1309.7 544.7L1303.6 690L1293.8 841L1098.3 863.6Z" fill="#48388c"/>
<path d="M1097.9 670.5C1105.3 673.1 1126.3 680.4 1142.5 686.2C1158.7 692 1177.5 698.8 1195 705.5C1212.5 712.2 1231 720.1 1247.5 726.5C1264 732.9 1284.2 740.4 1293.9 744C1303.7 747.6 1304 747.3 1306 748L1330 745L1330 500L1085 500L1085 666.5Z" fill="#4838c0"/>
<path d="M1096.2 625.2C1099.1 626.4 1106.4 628.9 1113.7 632.2C1121 635.5 1131.2 640.7 1140 645C1148.8 649.3 1157.5 653.8 1166.2 658C1175 662.2 1182.3 665.7 1192.5 670C1202.7 674.3 1217.1 680 1227.5 684C1237.9 688 1243.9 690.8 1255 694C1266.1 697.2 1285.4 701.3 1293.9 703C1302.4 704.7 1304 703.8 1306 704L1330 701L1330 500L1085 500L1085 621.2Z" fill="#4890b8"/>
<path d="M1096.2 592C1099.1 593.5 1106.4 596.9 1113.7 600.7C1121 604.5 1131.2 609.7 1140 614.7C1148.8 619.7 1157.5 625.5 1166.2 630.5C1175 635.5 1183.8 640.1 1192.5 644.5C1201.2 648.9 1210 653.2 1218.7 656.7C1227.5 660.2 1236.2 663 1245 665.5C1253.8 668 1263.1 670.3 1271.2 671.6C1279.3 672.9 1287.8 673.5 1293.6 673.4C1299.4 673.3 1303.9 671.4 1306 671L1330 668L1330 500L1085 500L1085 588Z" fill="#4ac8b0"/>
<path d="M1096 574.5C1099 575.7 1106.4 578.3 1113.7 581.5C1121 584.7 1131.2 589.3 1140 593.7C1148.8 598.1 1157.5 603.3 1166.2 607.7C1175 612.1 1183.8 616.5 1192.5 620C1201.2 623.5 1210 626.1 1218.7 628.7C1227.5 631.3 1236.2 633.8 1245 635.7C1253.8 637.6 1263.1 639.4 1271.2 640.1C1279.3 640.8 1287.5 640.6 1293.6 640.1C1299.7 639.6 1305.6 637.5 1308 637L1330 634L1330 500L1085 500L1085 570.5Z" fill="#4ac078"/>
<path d="M1110 550C1111.8 550.7 1115.7 552.9 1120.7 554.4C1125.7 555.9 1133.9 556.8 1140 558.7C1146.1 560.6 1151.7 563.1 1157.5 565.7C1163.3 568.3 1169.2 571.6 1175 574.5C1180.8 577.4 1185.2 580 1192.5 583.2C1199.8 586.4 1210 590.5 1218.7 593.7C1227.5 596.9 1236.2 600.2 1245 602.5C1253.8 604.8 1263.1 606.7 1271.2 607.7C1279.3 608.7 1287.1 609.1 1293.6 608.6C1300.1 608.1 1307.3 605.6 1310 605L1330 602L1330 500L1085 500L1085 546Z" fill="#50d020"/>
<path d="M1172 526C1173.1 527.4 1175.7 531.5 1178.5 534.6C1181.3 537.7 1184.9 541.3 1189 544.7C1193.1 548.1 1196.6 551.7 1203 555.2C1209.4 558.7 1219 562.8 1227.5 565.7C1236 568.6 1245 571.1 1253.7 572.7C1262.5 574.3 1273.3 575.4 1280 575.4C1286.7 575.4 1288.7 573.8 1294 572.7C1299.3 571.6 1309 569.6 1312 569L1330 566L1330 500L1085 500L1085 522Z" fill="#e8d028"/>
<path d="M1240 530Q1275 534 1294 548L1294 540L1260 528Z" fill="#c8b028"/>
<path d="M1097.9 730L1293.9 798.2L1293.9 841L1097.9 863.9Z" fill="#4040a8" />
<clipPath id="cfl"><path d="M1097.9 730L1293.9 798.2L1293.9 841L1097.9 863.9Z"/></clipPath>
<path d="M1097.9 616.4L1293.9 684.6M1097.9 630.6L1293.9 698.8M1097.9 644.8L1293.9 713M1097.9 659L1293.9 727.2M1097.9 673.2L1293.9 741.4M1097.9 687.4L1293.9 755.6M1097.9 701.6L1293.9 769.8M1097.9 715.8L1293.9 784M1097.9 730L1293.9 798.2M1097.9 744.2L1293.9 812.4M1097.9 758.4L1293.9 826.6M1097.9 772.6L1293.9 840.8M1097.9 786.8L1293.9 855M1097.9 801L1293.9 869.2M1097.9 815.2L1293.9 883.4M1097.9 829.4L1293.9 897.6M1097.9 843.6L1293.9 911.8M1097.9 857.8L1293.9 926M1097.9 872L1293.9 940.2M1097.9 886.2L1293.9 954.4M1097.9 863.9L1293.9 841M1097.9 848.9L1293.9 826M1097.9 833.9L1293.9 811M1097.9 818.9L1293.9 796M1097.9 803.9L1293.9 781M1097.9 788.9L1293.9 766M1097.9 773.9L1293.9 751M1097.9 758.9L1293.9 736M1097.9 743.9L1293.9 721M1097.9 728.9L1293.9 706M1097.9 713.9L1293.9 691M1097.9 698.9L1293.9 676" stroke="#807e9e" stroke-width=".9" fill="none" clip-path="url(#cfl)"/>
<path d="M1105.9 732.8V520M1125.1 739.5V520M1144.4 746.2V520M1163.6 752.9V520M1182.9 759.6V520M1220.5 772.7V520M1238.9 779.1V520M1258.1 785.7V520M1277.3 792.4V520M1097.9 693.3L1310 765.4M1097.9 656.6L1310 728.7M1097.9 619.9L1310 692M1097.9 583.2L1310 655.3M1097.9 546.5L1310 618.6M1097.9 509.8L1310 581.9" stroke="#8e8a90" stroke-width=".9" fill="none"/>
<path d="M1293.6 546.5L1309.7 544.7L1303.6 690L1293.8 841Z" fill="#a08c80" opacity=".45"/>
<path d="M1293.6 546.5L1293.8 841" stroke="#a09090" stroke-width="1"/>
</g>
<path d="M1174 536L1201.2 531L1201.2 764.7Z" fill="#d09080" opacity=".5"/>
<path d="M1174 536L1201.2 764.7V531M1097.9 776.4L1201.1 764.7" stroke="#ff8e8e" stroke-width="1.1" fill="none"/>
<path d="M1178.5 572h22.7M1182.8 609h18.4M1187 646h14.2M1191.5 683h9.7" stroke="#ff8e8e" stroke-width="1"/>
<path d="M1098.5 569.8L1195.9 741.9L1293.6 546.5" stroke="#5a5a50" stroke-width="1" fill="none"/>
<circle cx="1195.9" cy="741.9" r="2.4" fill="#f00"/>
<path d="M1098.5 569.8C1102.5 567.1 1114.1 558.3 1122.5 553.5C1130.9 548.7 1140 544.4 1148.7 541.2C1157.5 538 1166.2 535.9 1175 534.2C1183.8 532.5 1192.5 531.8 1201.2 531.1C1210 530.4 1218.8 530 1227.5 529.9C1236.2 529.8 1245.5 529.7 1253.7 530.7C1261.9 531.7 1269.8 533.4 1276.5 536C1283.2 538.6 1290.8 544.8 1293.6 546.5L1309.7 544.7L1303.6 690L1293.8 841L1098.3 863.6Z" fill="none" stroke="#a8928a" stroke-width="1"/>
<path d="M1078.7 540.4C1084.6 537 1102.1 526.1 1113.7 520.2C1125.4 514.4 1137.1 509.3 1148.7 505.4C1160.4 501.4 1172.1 498.8 1183.7 496.6C1195.4 494.4 1207.1 493 1218.7 492.2C1230.4 491.5 1242.1 491.2 1253.7 492.2C1265.4 493.3 1276.7 495.2 1288.7 498.4C1300.7 501.6 1319.6 509.3 1325.8 511.5L1309.7 544.7M1078.7 540.4L1098.5 569.8" fill="none" stroke="#9a9494" stroke-width="1"/>
<clipPath id="cov"><path d="M702.5 332.5C704.1 330.1 708.2 322 712 318C715.8 314 718.7 312.5 725 308.7C731.3 304.9 741.7 298.9 750 295C758.3 291.1 764.6 288.6 775 285C785.4 281.4 800 276.3 812.5 273.7C825 271.1 839.2 269.8 850 269.5C860.8 269.2 867.3 270.1 877 272C886.7 273.9 902.8 279.5 908 281L1235 401C1229.4 401.1 1213.6 400.5 1201.5 401.8C1189.4 403.1 1174.4 406.4 1162.5 409C1150.6 411.6 1140.8 414.3 1130 417.5C1119.2 420.7 1108.3 424.3 1097.5 428C1086.7 431.7 1075 435.5 1065 439.5C1055 443.5 1044.6 449.4 1037.4 452C1030.2 454.6 1028.2 454.8 1022 455C1015.8 455.2 1007 454.8 1000 453.5C993 452.2 988.3 450.6 980 447.5C971.7 444.4 963.3 439.6 950 435C936.7 430.4 914.2 424.6 900 420C885.8 415.4 879.6 412.1 865 407.5C850.4 402.9 827.5 397.1 812.5 392.5C797.5 387.9 787.1 383.8 775 380C762.9 376.2 750.8 374.2 740 370C729.2 365.8 716.2 361.2 710 355C703.8 348.8 703.8 336.2 702.5 332.5Z"/></clipPath>
<g clip-path="url(#cov)">
<path d="M702.5 332.5C704.1 330.1 708.2 322 712 318C715.8 314 718.7 312.5 725 308.7C731.3 304.9 741.7 298.9 750 295C758.3 291.1 764.6 288.6 775 285C785.4 281.4 800 276.3 812.5 273.7C825 271.1 839.2 269.8 850 269.5C860.8 269.2 867.3 270.1 877 272C886.7 273.9 902.8 279.5 908 281L1235 401C1229.4 401.1 1213.6 400.5 1201.5 401.8C1189.4 403.1 1174.4 406.4 1162.5 409C1150.6 411.6 1140.8 414.3 1130 417.5C1119.2 420.7 1108.3 424.3 1097.5 428C1086.7 431.7 1075 435.5 1065 439.5C1055 443.5 1044.6 449.4 1037.4 452C1030.2 454.6 1028.2 454.8 1022 455C1015.8 455.2 1007 454.8 1000 453.5C993 452.2 988.3 450.6 980 447.5C971.7 444.4 963.3 439.6 950 435C936.7 430.4 914.2 424.6 900 420C885.8 415.4 879.6 412.1 865 407.5C850.4 402.9 827.5 397.1 812.5 392.5C797.5 387.9 787.1 383.8 775 380C762.9 376.2 750.8 374.2 740 370C729.2 365.8 716.2 361.2 710 355C703.8 348.8 703.8 336.2 702.5 332.5Z" fill="#00e682"/>
<path d="M700 400L780 375C779.2 372.5 775 365 775 360C775 355 775.8 350.4 780 345C784.2 339.6 792.5 332.3 800 327.5C807.5 322.7 816.7 319 825 316.2C833.3 313.5 841.7 312.3 850 311.2C858.3 310.2 866.7 309.9 875 310C883.3 310.1 887.5 310.5 900 312C912.5 313.5 933.3 316.6 950 318.8C966.7 320.9 983.3 320.8 1000 325C1016.7 329.2 1033.3 337.7 1050 344C1066.7 350.3 1075 354 1100 363C1125 372 1176.7 390.2 1200 398C1223.3 405.8 1233.3 408 1240 410L1240 250L690 250Z" fill="#00f2f2"/>
<path d="M690 350L705 350C708.3 350.4 717.5 354.2 725 352.5C732.5 350.8 741.7 345 750 340C758.3 335 766.7 327.5 775 322.5C783.3 317.5 791.7 313.1 800 310C808.3 306.9 816.7 305.2 825 303.8C833.3 302.3 841.7 301.7 850 301.2C858.3 300.8 866.7 300.8 875 301.2C883.3 301.7 887.5 302.1 900 303.8C912.5 305.4 937.5 309.2 950 311.2C962.5 313.3 966.7 314.8 975 316.2C983.3 317.7 979.2 313 1000 320C1020.8 327 1066.7 345.5 1100 358C1133.3 370.5 1176.7 386.7 1200 395C1223.3 403.3 1233.3 405.8 1240 408L1240 250L690 250Z" fill="#0099ff"/>
<path d="M690 336L702.5 336.2C706.2 335.6 717.1 334.8 725 332.5C732.9 330.2 741.7 326.7 750 322.5C758.3 318.3 766.7 311.7 775 307.5C783.3 303.3 791.7 300 800 297.5C808.3 295 816.7 293.5 825 292.5C833.3 291.5 841.7 291.2 850 291.2C858.3 291.2 866.7 291.7 875 292.5C883.3 293.3 891.7 295 900 296.2C908.3 297.5 916.7 298.8 925 300C933.3 301.2 937.5 301.1 950 303.8C962.5 306.4 975 307.6 1000 316C1025 324.4 1066.7 341.3 1100 354C1133.3 366.7 1183.3 385.7 1200 392L1240 250L690 250Z" fill="#0000ff"/>
<path d="M802.5 338.8C803.8 334.8 805.8 329 812.5 325C819.2 321 831.2 317.3 842.5 315C853.8 312.7 866.2 311.7 880 311.2C893.8 310.8 910 310.8 925 312.5C940 314.2 954.6 317.3 970 321.2C985.4 325.2 1001.2 330.6 1017.5 336.2C1033.8 341.9 1050.8 348.3 1067.5 355C1084.2 361.7 1100.8 369.2 1117.5 376.2C1134.2 383.3 1152.9 391.9 1167.5 397.5C1182.1 403.1 1202.9 406.2 1205 410C1207.1 413.8 1190.4 416.7 1180 420C1169.6 423.3 1155 426.9 1142.5 430C1130 433.1 1117.5 436.7 1105 438.8C1092.5 440.8 1080 442.1 1067.5 442.5C1055 442.9 1044.6 442.7 1030 441.2C1015.4 439.8 995.8 437.1 980 433.8C964.2 430.4 949.6 426 935 421.2C920.4 416.5 905.8 410.6 892.5 405C879.2 399.4 866.2 393.8 855 387.5C843.8 381.2 833.3 374 825 367.5C816.7 361 808.8 353.5 805 348.8C801.2 344 801.2 342.7 802.5 338.8Z" fill="#00ff00" />
<path d="M828.8 338.8C829.8 335.6 831.9 332.6 837.5 330C843.1 327.4 852.1 324.6 862.5 323C872.9 321.4 886.7 320.4 900 320.5C913.3 320.6 928.3 321.5 942.5 323.8C956.7 326 970.4 329.6 985 333.8C999.6 337.9 1014.2 343.1 1030 348.8C1045.8 354.4 1063.3 360.8 1080 367.5C1096.7 374.2 1113.3 382.1 1130 388.8C1146.7 395.4 1169.2 403.3 1180 407.5C1190.8 411.7 1194.2 412.3 1195 413.8C1195.8 415.2 1190.8 415.2 1185 416.2C1179.2 417.3 1169.2 418.1 1160 420C1150.8 421.9 1141.2 425.4 1130 427.5C1118.8 429.6 1105.8 431.6 1092.5 432.5C1079.2 433.4 1064.6 433.8 1050 433C1035.4 432.2 1020 430.3 1005 427.5C990 424.7 974.6 420.6 960 416.2C945.4 411.9 930.8 406.7 917.5 401.2C904.2 395.8 891.2 389.8 880 383.8C868.8 377.7 858.1 370.8 850 365C841.9 359.2 834.8 353.1 831.2 348.8C827.7 344.4 827.7 341.9 828.8 338.8Z" fill="#ffff00" />
<path d="M855 341.2C856.2 338.8 858.8 335.7 865 333.8C871.2 331.8 881.7 330.1 892.5 329.5C903.3 328.9 916.2 328.5 930 330C943.8 331.5 960.4 335.2 975 338.8C989.6 342.3 1004.2 346.9 1017.5 351.2C1030.8 355.6 1040.4 359.6 1055 365C1069.6 370.4 1090.4 378.1 1105 383.8C1119.6 389.4 1131.7 394.4 1142.5 398.8C1153.3 403.1 1163.3 407.5 1170 410C1176.7 412.5 1182.5 412.7 1182.5 413.8C1182.5 414.8 1176.7 415 1170 416.2C1163.3 417.5 1153.3 419.6 1142.5 421.2C1131.7 422.9 1117.5 425.3 1105 426.2C1092.5 427.2 1080 427.6 1067.5 427C1055 426.4 1043.8 424.9 1030 422.5C1016.2 420.1 999.6 416.5 985 412.5C970.4 408.5 955.8 403.8 942.5 398.8C929.2 393.8 916.2 388.3 905 382.5C893.8 376.7 882.9 369.4 875 363.8C867.1 358.1 860.8 352.5 857.5 348.8C854.2 345 853.8 343.8 855 341.2Z" fill="#cece00" />
<path d="M880 350C880.8 347.7 882.5 345.5 887.5 343.8C892.5 342 901.2 340.2 910 339.5C918.8 338.8 929.2 338.4 940 339.5C950.8 340.6 962.1 343 975 346.2C987.9 349.5 1004.2 354.4 1017.5 358.8C1030.8 363.1 1042.5 367.9 1055 372.5C1067.5 377.1 1080 381.7 1092.5 386.2C1105 390.8 1120.4 396.2 1130 400C1139.6 403.8 1145.4 406.7 1150 408.8C1154.6 410.8 1158.8 411.5 1157.5 412.5C1156.2 413.5 1149.2 414 1142.5 415C1135.8 416 1127.9 417.7 1117.5 418.8C1107.1 419.8 1092.5 421.2 1080 421.2C1067.5 421.2 1055.8 420.4 1042.5 418.8C1029.2 417.1 1013.8 414.4 1000 411.2C986.2 408.1 972.5 404.2 960 400C947.5 395.8 935.4 391.2 925 386.2C914.6 381.2 904.6 374.8 897.5 370C890.4 365.2 885.4 360.8 882.5 357.5C879.6 354.2 879.2 352.3 880 350Z" fill="#ffae00" />
<path d="M908.8 360C909.6 357.9 910.6 354.2 915 352.5C919.4 350.8 927.5 349.7 935 349.5C942.5 349.3 950.4 349.7 960 351.2C969.6 352.8 980.8 355.6 992.5 358.8C1004.2 361.9 1017.5 366 1030 370C1042.5 374 1055.8 378.5 1067.5 382.5C1079.2 386.5 1091.2 390.6 1100 393.8C1108.8 396.9 1115.2 399.2 1120 401.2C1124.8 403.3 1128.8 404.9 1128.8 406.2C1128.8 407.6 1124.8 408.5 1120 409.5C1115.2 410.5 1108.8 411.8 1100 412.5C1091.2 413.2 1077.9 413.8 1067.5 413.8C1057.1 413.7 1047.9 413.2 1037.5 412C1027.1 410.8 1015.8 408.7 1005 406.2C994.2 403.8 982.9 400.6 972.5 397.5C962.1 394.4 951.2 391.2 942.5 387.5C933.8 383.8 925.4 378.8 920 375C914.6 371.2 911.9 367.5 910 365C908.1 362.5 907.9 362.1 908.8 360Z" fill="#ff0000" />
<path d="M972.5 386.2C973.3 384.5 986.2 383.6 995 383C1003.8 382.4 1015 382 1025 382.5C1035 383 1045.8 384.4 1055 386.2C1064.2 388.1 1073.3 391 1080 393.8C1086.7 396.5 1095 400.2 1095 402.5C1095 404.8 1087.5 406.8 1080 407.5C1072.5 408.2 1060.4 408 1050 407C1039.6 406 1027.5 403.5 1017.5 401.2C1007.5 399 997.5 396.2 990 393.8C982.5 391.2 971.7 388 972.5 386.2Z" fill="#b80000" />
<path d="M1097.5 428C1092.1 429.9 1075 435.5 1065 439.5C1055 443.5 1044.6 449.4 1037.4 452C1030.2 454.6 1028.2 454.8 1022 455C1015.8 455.2 1007 454.8 1000 453.5C993 452.2 983.3 448.5 980 447.5" fill="none" stroke="#00f2f2" stroke-width="15" stroke-linecap="round"/>
<path d="M1097.5 428C1092.1 429.9 1075 435.5 1065 439.5C1055 443.5 1044.6 449.4 1037.4 452C1030.2 454.6 1024.6 454.5 1022 455" fill="none" stroke="#0099ff" stroke-width="8" stroke-linecap="round"/>
<path d="M1097.5 429L1130 418L1163 409.5" fill="none" stroke="#0000ff" stroke-width="2.4" stroke-linecap="round"/>
<path d="M702.5 332.5C704.1 330.1 708.2 322 712 318C715.8 314 718.7 312.5 725 308.7C731.3 304.9 741.7 298.9 750 295C758.3 291.1 764.6 288.6 775 285C785.4 281.4 800 276.3 812.5 273.7C825 271.1 839.2 269.8 850 269.5C860.8 269.2 867.3 270.1 877 272C886.7 273.9 902.8 279.5 908 281L1235 401C1229.4 401.1 1213.6 400.5 1201.5 401.8C1189.4 403.1 1174.4 406.4 1162.5 409C1150.6 411.6 1140.8 414.3 1130 417.5C1119.2 420.7 1108.3 424.3 1097.5 428C1086.7 431.7 1075 435.5 1065 439.5C1055 443.5 1044.6 449.4 1037.4 452C1030.2 454.6 1028.2 454.8 1022 455C1015.8 455.2 1007 454.8 1000 453.5C993 452.2 988.3 450.6 980 447.5C971.7 444.4 963.3 439.6 950 435C936.7 430.4 914.2 424.6 900 420C885.8 415.4 879.6 412.1 865 407.5C850.4 402.9 827.5 397.1 812.5 392.5C797.5 387.9 787.1 383.8 775 380C762.9 376.2 750.8 374.2 740 370C729.2 365.8 716.2 361.2 710 355C703.8 348.8 703.8 336.2 702.5 332.5Z" fill="#b48d64" opacity=".41"/>
<path d="M690 230.3L1240 401.2M690 243.9L1240 405.7M690 256.4L1240 409.8M690 268.8L1240 413.8M690 283.1L1240 418.5M690 299.9L1240 424M690 317.3L1240 429.7M690 335.9L1240 435.8M690 355.8L1240 442.3M690 375.7L1240 448.9M690 395.6L1240 455.4M712 268.5Q637 290.5 562 360.5l-45 42M736.5 268.5Q661.5 290.5 586.5 360.5l-45 42M761 268.5Q686 290.5 611 360.5l-45 42M785.5 268.5Q710.5 290.5 635.5 360.5l-45 42M810 268.5Q735 290.5 660 360.5l-45 42M834.5 268.5Q759.5 290.5 684.5 360.5l-45 42M859 268.5Q785.3 290.6 710.4 361l-44.9 42.2M883.5 272Q813.2 294.4 738.9 365.8l-44.6 42.8M908 281Q841.1 303.7 767.3 376l-44.3 43.4M932.5 290Q869 313 795.7 386.3l-44 44M957 299Q897 322.3 824.1 396.5l-43.7 44.6M981.5 308Q924.9 331.6 852.5 406.8l-43.4 45.2M1006 317Q952.8 340.8 881 417.1l-43.1 45.7M1030.5 326Q980.8 350.1 909.4 427.3l-42.8 46.3M1055 334.9Q1008.7 359.4 937.8 437.6l-42.5 46.9M1079.5 343.9Q1036.6 368.7 966.2 447.9l-42.2 47.5M1104 352.9Q1064 377.9 994 457.9l-42 48M1128.5 361.9Q1088.5 386.9 1018.5 466.9l-42 48M1153 370.9Q1113 395.9 1043 475.9l-42 48M1177.5 379.9Q1137.5 404.9 1067.5 484.9l-42 48M1202 388.9Q1162 413.9 1092 493.9l-42 48M1226.5 397.9Q1186.5 422.9 1116.5 502.9l-42 48M1251 406.9Q1211 431.9 1141 511.9l-42 48M1275.5 415.9Q1235.5 440.9 1165.5 520.9l-42 48" stroke="#8c8686" stroke-width=".8" fill="none"/>
</g>
<path d="M930 289L1235 401L1200 399L1000 328Z" fill="#bfa080" opacity=".85"/>
<path d="M866 407.5C869 405.1 876.1 399.2 883.7 393.4C891.4 387.6 902.2 379 911.9 372.8C921.6 366.6 931.6 360.7 941.9 356C952.2 351.3 963.1 347.7 973.7 344.7C984.3 341.7 995 339.4 1005.6 338.1C1016.2 336.9 1026.9 336.4 1037.5 337.2C1048.1 338 1059.1 339.8 1069.4 342.8C1079.7 345.8 1089.7 350.9 1099.4 355C1109.1 359.1 1122.8 365.2 1127.5 367.2L1099.4 364.4C1093.5 366.1 1074.3 372 1063.7 374.7C1053.1 377.4 1045.1 378.6 1035.6 380.3C1026.1 382 1016 384.1 1006.6 385C997.2 385.9 989.2 385.8 979.4 386C969.5 386.2 957.8 384.9 947.5 386C937.2 387.1 931.1 388.9 917.5 392.5C903.9 396.1 874.6 405 866 407.5Z" fill="#ff8a8a" opacity=".3"/>
<path d="M866 407.5C869 405.1 876.1 399.2 883.7 393.4C891.4 387.6 902.2 379 911.9 372.8C921.6 366.6 931.6 360.7 941.9 356C952.2 351.3 963.1 347.7 973.7 344.7C984.3 341.7 995 339.4 1005.6 338.1C1016.2 336.9 1026.9 336.4 1037.5 337.2C1048.1 338 1059.1 339.8 1069.4 342.8C1079.7 345.8 1089.7 350.9 1099.4 355C1109.1 359.1 1122.8 365.2 1127.5 367.2" fill="none" stroke="#ff9a9a" stroke-width="1.1"/>
<path d="M883.8 393.4L886.6 400.9M911.9 372.8L919.4 392.5M941.9 355.9L949.4 385.9M973.8 344.7L979.4 385.9M1005.6 338.1L1006.6 385M1037.5 337.2L1035.6 380.3M1069.4 342.8L1063.8 374.7M1099.4 355L1095.6 366.3" stroke="#ff9a9a" stroke-width=".9" fill="none"/>
<path d="M602.5 413L988.2 546.5L1001 875.5" fill="none" stroke="#9a9aa0" stroke-width="1"/>
<path d="M988.2 546.5C991.4 540.8 999.7 522.6 1007.5 512C1015.3 501.4 1023.6 493.1 1035 483C1046.4 472.9 1062.2 460.4 1076 451.5C1089.8 442.6 1101.4 436.4 1117.5 429.5C1133.6 422.6 1152.9 414.8 1172.5 410C1192.1 405.2 1224.6 402.5 1235 401C1240.6 401.2 1256.3 400 1268.8 402C1281.3 404 1296.3 408 1310 413C1323.7 418 1338.2 423.8 1351 432C1363.8 440.2 1376.4 451.5 1387 462.5C1397.6 473.5 1409.9 492.1 1414.5 498" fill="none" stroke="#8f8f96" stroke-width="1"/>
<path d="M602.5 413C604.2 410.4 608.8 402.7 612.5 397.5C616.2 392.3 620.8 387 625 382C629.2 377 631.2 374.1 637.5 367.5C643.8 360.9 654.2 350 662.5 342.5C670.8 335 679.2 328.8 687.5 322.5C695.8 316.2 704.2 310.2 712.5 305C720.8 299.8 729.2 295.2 737.5 291.2C745.8 287.2 754.2 283.9 762.5 281.2C770.8 278.5 779.2 276.8 787.5 275C795.8 273.2 804.2 271.6 812.5 270.5C820.8 269.4 829.2 268.8 837.5 268.7C845.8 268.6 854.2 268.9 862.5 270C870.8 271.1 879.9 273.2 887.5 275C895.1 276.8 904.6 280 908 281L1235 401" fill="none" stroke="#8a8ab0" stroke-width=".8" opacity=".7"/>
<path d="M1414.5 498L1392 829" fill="none" stroke="#c8c8d0" stroke-width=".8"/>
<path d="M787 600L812 812" stroke="#ff9a9a" stroke-width="1" opacity=".9"/>
<circle cx="622" cy="745" r="1.9" fill="none" stroke="#f00" stroke-width="1.1"/>
<circle cx="1001" cy="875.5" r="1.9" fill="none" stroke="#f00" stroke-width="1.1"/>
<circle cx="1392" cy="829" r="1.9" fill="none" stroke="#f00" stroke-width="1.1"/>
<circle cx="1098.3" cy="863.4" r="1.9" fill="none" stroke="#f00" stroke-width="1.1"/>
<circle cx="1293.5" cy="840.8" r="1.9" fill="none" stroke="#f00" stroke-width="1.1"/>
<circle cx="1098.5" cy="569.8" r="2.2" fill="#f00"/>
<circle cx="1293.6" cy="546.5" r="2.2" fill="#f00"/>
<path d="M641 751.5v-8M659.9 758v-8M678.9 764.6v-8M697.8 771.1v-8M716.8 777.6v-8M735.7 784.1v-8M754.6 790.7v-8M773.6 797.2v-8M792.5 803.7v-8M811.5 810.2v-8M830.5 816.8v-8M849.4 823.3v-8M868.4 829.8v-8M887.3 836.4v-8M906.2 842.9v-8M925.2 849.4v-8M944.1 855.9v-8M963.1 862.5v-8M982 869v-8M1033.6 871.6v-17M1066.6 867.7v-17M1297.6 840.2v-17M1330.6 836.3v-17M1363.6 832.4v-17" stroke="#8f8fc8" stroke-width=".8" fill="none"/>
<path d="M817 510L833.1 507.4" stroke="#ffb0c0" stroke-width="1.3"/><path d="M842 506L833.5 509.9L832.7 505Z" fill="#ffb0c0"/>
<path d="M817 510L810.4 507.3" stroke="#4aa8f0" stroke-width="1.3"/><path d="M802 504L811.3 505L809.4 509.7Z" fill="#4aa8f0"/>
<path d="M817 510L817 534" stroke="#48b000" stroke-width="1.6"/><path d="M817 543L814.5 534L819.5 534Z" fill="#48b000"/>
<text x="846" y="511" font-size="12" fill="#ff8fa0" font-family="Liberation Sans" >x</text>
<text x="793" y="507" font-size="12" fill="#4aa8f0" font-family="Liberation Sans" >z</text>
<text x="812" y="560" font-size="12" fill="#58b020" font-family="Liberation Sans" >y</text>
<text x="819" y="556" font-size="12" fill="#58b020" font-family="Liberation Sans" >y</text>
<path d="M811 601L811 581" stroke="#58c020" stroke-width="1.3"/><path d="M811 572L813.5 581L808.5 581Z" fill="#58c020"/>
<path d="M811 601L817.3 602.7" stroke="#e06080" stroke-width="1.3"/><path d="M826 605L816.7 605.1L817.9 600.3Z" fill="#e06080"/>
<path d="M811 601L793.9 603.6" stroke="#4aa8f0" stroke-width="1.3"/><path d="M785 605L793.5 601.2L794.3 606.1Z" fill="#4aa8f0"/>
<text x="829" y="610" font-size="12" fill="#ff8fa0" font-family="Liberation Sans" >x</text>
<text x="772" y="609" font-size="12" fill="#4aa8f0" font-family="Liberation Sans" >z</text>
<path d="M1006 337L1021.1 335.1" stroke="#ff9090" stroke-width="1.3"/><path d="M1030 334L1021.4 337.6L1020.8 332.6Z" fill="#ff9090"/>
<path d="M1006 337L1013.6 339.8" stroke="#408020" stroke-width="1.3"/><path d="M1022 343L1012.7 342.2L1014.5 337.5Z" fill="#408020"/>
<path d="M1006 338L1006 359" stroke="#4aa8f0" stroke-width="1.4"/><path d="M1006 368L1003.5 359L1008.5 359Z" fill="#4aa8f0"/>
<text x="1040" y="335" font-size="12" fill="#ff8fa0" font-family="Liberation Sans" >x</text>
<text x="1025" y="350" font-size="12" fill="#58b020" font-family="Liberation Sans" >y</text>
<text x="1002" y="383" font-size="12" fill="#4aa8f0" font-family="Liberation Sans" >z</text>
<text x="1010" y="398" font-size="11.5" fill="#d08a80" font-family="Liberation Sans" opacity=".8" letter-spacing="-.3">10.457</text>
<text x="1029" y="407" font-size="11.5" fill="#9868a0" font-family="Liberation Sans" opacity=".8" letter-spacing="-.3">10.476</text>
<path d="M1196 525L1196 505" stroke="#ffa0a0" stroke-width="1.4"/><path d="M1196 496L1198.5 505L1193.5 505Z" fill="#ffa0a0"/>
<path d="M1196 525L1180 526.3" stroke="#88b020" stroke-width="1.3"/><path d="M1171 527L1179.8 523.8L1180.2 528.8Z" fill="#88b020"/>
<path d="M1196 525L1203.4 527.3" stroke="#4aa8f0" stroke-width="1.3"/><path d="M1212 530L1202.7 529.7L1204.2 524.9Z" fill="#4aa8f0"/>
<text x="1192" y="491" font-size="12" fill="#ff8fa0" font-family="Liberation Sans" >x</text>
<text x="1198" y="520" font-size="12" fill="#58b020" font-family="Liberation Sans" >y</text>
<text x="1159" y="536" font-size="12" fill="#58b020" font-family="Liberation Sans" >y</text>
<text x="1214" y="536" font-size="12" fill="#4aa8f0" font-family="Liberation Sans" >z</text>
<path d="M1201 558L1201 540" stroke="#58c020" stroke-width="1.4"/><path d="M1201 531L1203.5 540L1198.5 540Z" fill="#58c020"/>
<path d="M1201 558L1209.2 559.9" stroke="#e06060" stroke-width="1.3"/><path d="M1218 562L1208.7 562.4L1209.8 557.5Z" fill="#e06060"/>
<path d="M1201 558L1184 559.3" stroke="#4aa8f0" stroke-width="1.3"/><path d="M1175 560L1183.8 556.8L1184.2 561.8Z" fill="#4aa8f0"/>
<text x="1220" y="568" font-size="12" fill="#ff8fa0" font-family="Liberation Sans" >x</text>
<text x="1163" y="565" font-size="12" fill="#4aa8f0" font-family="Liberation Sans" >z</text>
<path d="M1325 639L1344.1 637" stroke="#ff9a9a" stroke-width="1.3"/><path d="M1353 636L1344.3 639.4L1343.8 634.5Z" fill="#ff9a9a"/>
<path d="M1325 639L1319.5 637" stroke="#a8d8e8" stroke-width="1.3"/><path d="M1311 634L1320.3 634.7L1318.6 639.4Z" fill="#a8d8e8"/>
<path d="M1325 640L1325 663" stroke="#58c020" stroke-width="1.6"/><path d="M1325 672L1322.5 663L1327.5 663Z" fill="#58c020"/>
<text x="1358" y="641" font-size="12" fill="#ff8fa0" font-family="Liberation Sans" >x</text>
<text x="1299" y="637" font-size="12" fill="#4aa8f0" font-family="Liberation Sans" >z</text>
<text x="1322" y="690" font-size="12" fill="#58b020" font-family="Liberation Sans" >y</text>
<path d="M1070 808L1089.1 805.3" stroke="#ff9a9a" stroke-width="1.3"/><path d="M1098 804L1089.4 807.7L1088.7 802.8Z" fill="#ff9a9a"/>
<path d="M1070 808L1079.6 811.7" stroke="#409020" stroke-width="1.3"/><path d="M1088 815L1078.7 814.1L1080.5 809.4Z" fill="#409020"/>
<path d="M1070 808L1070 833" stroke="#58c8f0" stroke-width="1.3"/><path d="M1070 842L1067.5 833L1072.5 833Z" fill="#58c8f0"/>
<text x="1102" y="809" font-size="12" fill="#ff8fa0" font-family="Liberation Sans" >x</text>
<text x="1087" y="823" font-size="12" fill="#58b020" font-family="Liberation Sans" >y</text>
<text x="1065" y="856" font-size="12" fill="#4aa8f0" font-family="Liberation Sans" >z</text>
<path d="M937 884L960.3 880.2" stroke="#e80000" stroke-width="2"/><path d="M971 878.5L960.8 883.2L959.9 877.3Z" fill="#e80000"/>
<path d="M937 884L949 890" stroke="#20a020" stroke-width="3"/><path d="M956 894l-9-1 4-7z" fill="#20a020"/>
<path d="M937 884L937 910.2" stroke="#000090" stroke-width="2"/><path d="M937 921L934 910.2L940 910.2Z" fill="#000090"/>
<circle cx="937" cy="884" r="3.6" fill="#e8d820" stroke="#a09010" stroke-width=".6"/>
<text x="979" y="883" font-size="12.5" fill="#e80000" font-family="Liberation Sans" >X</text>
<text x="962" y="897" font-size="11" fill="#20b020" font-family="Liberation Sans" >Y</text>
<text x="932" y="936" font-size="12.5" fill="#000090" font-family="Liberation Sans" >Z</text>
<path d="M412 1083L435.3 1079.2" stroke="#e80000" stroke-width="2"/><path d="M446 1077.5L435.8 1082.2L434.9 1076.3Z" fill="#e80000"/>
<path d="M412 1083L424 1089" stroke="#20a020" stroke-width="3"/><path d="M431 1093l-9-1 4-7z" fill="#20a020"/>
<path d="M412 1083L412 1109.2" stroke="#000090" stroke-width="2"/><path d="M412 1120L409 1109.2L415 1109.2Z" fill="#000090"/>
<circle cx="412" cy="1083" r="3.6" fill="#e8d820" stroke="#a09010" stroke-width=".6"/>
<text x="454" y="1082" font-size="12.5" fill="#e80000" font-family="Liberation Sans" >X</text>
<text x="437" y="1096" font-size="11" fill="#20b020" font-family="Liberation Sans" >Y</text>
<text x="407" y="1135" font-size="12.5" fill="#000090" font-family="Liberation Sans" >Z</text>
<text x="502" y="124.5" font-size="12" fill="#000" font-family="Liberation Sans" text-anchor="end" letter-spacing="-.3">LK2 - 1.35 * LF1 + 1.50 * LF2</text>
<text x="449" y="141.5" font-size="12" fill="#000" font-family="Liberation Sans" text-anchor="end" letter-spacing="-.3">Statische Analyse</text>
<text x="508" y="158.5" font-size="12" fill="#000" font-family="Liberation Sans" text-anchor="end" letter-spacing="-.3">Berechnungsdiagramm Nr. 5 | Faktor: 1.000</text>
<text x="492" y="175.5" font-size="12" fill="#000" font-family="Liberation Sans" text-anchor="end" letter-spacing=".05">Verschiebungen |u| [mm]</text>
<text x="358" y="1149" font-size="12" fill="#000" font-family="Liberation Sans" letter-spacing="-.3">max |u| : 10.476 | min |u| : 0.000 mm</text>
<g stroke-linejoin="round">
<path d="M1484 139.2L1543.5 131.8L1578 144L1518.1 150.6Z" fill="#7e7c7c" stroke="#7e7c7c" stroke-width="1.5"/>
<path d="M1484 139.2L1518.1 150.6L1518.1 217.5L1484 205.3Z" fill="#b6b6b6" stroke="#8a8888" stroke-width="1"/>
<path d="M1518.1 150.6L1578 144L1578.5 210.1L1518.1 217.5Z" fill="#d0d0d0" stroke="#8a8888" stroke-width="1"/>
<path d="M1492.7 142.5V208.5M1509.8 148V214.5M1484 157.2L1518.1 168.1L1578.2 161.1M1484 190L1518.1 201.4L1578.4 194.8M1533.9 149V215.5M1563.2 145.7V212M1518.1 150.6V217.5" stroke="#7c7878" stroke-width="1.4" fill="none"/>
<path d="M1492.7 142.5L1552 135M1509.8 148L1566 140M1505 136.5L1540 148.2M1524 134.5L1560 146" stroke="#747272" stroke-width=".8" fill="none"/>
<path d="M1524 142.3L1541 140.8L1542 143L1526 144.2Z" fill="#4a4a90" opacity=".75"/>
<text x="1496.5" y="185.8" font-size="10.5" fill="#e83030" font-family="Liberation Sans" font-weight="bold" letter-spacing="-1.4">+X</text>
<text x="1541" y="186.8" font-size="12.5" fill="#30c040" font-family="Liberation Sans" font-weight="bold" letter-spacing="-.3">-Y</text>
</g>
<rect x="1536" y="247" width="7" height="150" fill="#8a8a8a"/><path d="M1531 247h17" stroke="#8a8a8a" stroke-width="3"/><path d="M1536 397.5h13" stroke="#b0b0b0" stroke-width="1"/>
<text x="1567" y="251" font-size="11.5" fill="#000" font-family="Liberation Sans" letter-spacing="-.3">1.000</text>
<text x="1567" y="401" font-size="11.5" fill="#000" font-family="Liberation Sans" letter-spacing="-.3">0.000</text>
<g><circle cx="1539.1" cy="1122" r="24.9" fill="#e5e5f3"/><clipPath id="cav"><circle cx="1539.1" cy="1122" r="24.9"/></clipPath><g clip-path="url(#cav)"><path d="M1520 1122c-2-8 3-16 11-18 5-3 13-3 18 1 6 2 10 8 10 14 1 5-1 10-4 13-2 3-5 4-8 3l-18 1c-4 0-8-6-9-14z" fill="#8a7862"/><path d="M1546 1106c6 1 11 6 12 12 1 6-2 12-6 15l-4-2c3-8 3-17-2-25z" fill="#bcab92"/><path d="M1521 1120c0-6 3-11 8-14-3 6-4 14-2 22l-3 3c-2-3-3-7-3-11z" fill="#6f5b49"/><rect x="1531.5" y="1131" width="14.5" height="18" fill="#e6ba9b"/><path d="M1523 1141.5l8.5-6.5v13zM1555.5 1140.5l-9.5-6v13z" fill="#3b7bd0"/><path d="M1516 1150l8-9 7 6v5zM1562 1150l-7-10-9 7v5z" fill="#2a5fb0"/><ellipse cx="1538.6" cy="1124.3" rx="8.8" ry="11.3" fill="#e3b697"/><path d="M1529.5 1120c0-7 4-11 9.5-11 4 0 8 3 8.5 9-3-3-5-6-7-7-3 3-7 6-11 9z" fill="#94826c"/><rect x="1530" y="1118.8" width="8.3" height="6.4" rx="1.8" fill="none" stroke="#4a5fa2" stroke-width="1.2"/><rect x="1540.4" y="1118.8" width="8.3" height="6.4" rx="1.8" fill="none" stroke="#4a5fa2" stroke-width="1.2"/><path d="M1538.3 1120.5h2.1" stroke="#4a5fa2" stroke-width="1"/><path d="M1535.3 1130.3q3.3 1.6 6.6 0" stroke="#b86a6a" stroke-width="1.1" fill="none"/></g></g>
</svg>
<svg class="abs" style="left:0;top:0;pointer-events:none" width="1600" height="1200"><rect x="399.5" y="54.0" width="24" height="22" rx="3.5" fill="#cce8ff" stroke="#99d1ff"/><g transform="translate(403,55)"><rect x="3" y="2" width="14" height="16" fill="#e8e8e8" stroke="#555"/><rect x="3" y="2" width="14" height="2.5" fill="#3548c0"/><rect x="4.5" y="5.5" width="4" height="2" fill="#e33"/><rect x="4.5" y="8" width="4" height="2" fill="#f5a623"/><rect x="4.5" y="10.5" width="4" height="2" fill="#1ec81e"/><rect x="4.5" y="13" width="4" height="2" fill="#1e9bf0"/><rect x="4.5" y="15.5" width="4" height="1.6" fill="#4040c0"/><path d="M10 6.5h5M10 9h5M10 11.5h5M10 14h5" stroke="#444" stroke-width=".9"/></g><g transform="translate(427,55)"><rect x="1.5" y="2.5" width="17" height="15" fill="#e9e9e9" stroke="#444"/><rect x="1.5" y="2.5" width="17" height="2.5" fill="#3548c0"/><path d="M3.5 8l3 2-3 2M7.5 8l3 2-3 2" fill="none" stroke="#111" stroke-width="1.4"/><path d="M12 13.5h4" stroke="#111" stroke-width="1.4"/></g><g transform="translate(453,55)"><rect x="3.5" y="1.5" width="13" height="9" fill="#e9e9e9" stroke="#666"/><rect x="3.5" y="1.5" width="13" height="2.2" fill="#3548c0"/><rect x="1" y="9" width="18" height="9" rx="2" fill="#bdbdbd"/><text x="2" y="16.5" font-size="8.5" font-weight="bold" fill="#222" font-family="Liberation Sans">&gt;sc</text></g><g transform="translate(479,55)"><rect x="4.5" y="1.5" width="11" height="17" fill="#eee" stroke="#555"/><rect x="4.5" y="1.5" width="11" height="2.5" fill="#3548c0"/><path d="M6.5 7h7M6.5 9.5h7M6.5 12h7M6.5 14.5h7" stroke="#555" stroke-width="1"/></g><g transform="translate(505,55)"><circle cx="10" cy="9" r="5.5" fill="#d6d6d6" stroke="#888"/><path d="M3.5 10a6.5 6.5 0 0 1 13 0" fill="none" stroke="#777" stroke-width="1.5"/><rect x="2.5" y="9" width="2.5" height="4.5" fill="#777"/><rect x="15" y="9" width="2.5" height="4.5" fill="#777"/><circle cx="8" cy="8.5" r=".9" fill="#555"/><circle cx="12" cy="8.5" r=".9" fill="#555"/><path d="M8 11.5q2 1.5 4 0" stroke="#555" fill="none"/><path d="M16 14q-2 3-5 3" stroke="#777" fill="none"/></g><path d="M530.5 52v27" stroke="#dedede" stroke-width="1"/><path d="M535.5 55v20" stroke="#b5b5b5" stroke-width="1.4" stroke-dasharray="1.5 2"/><g transform="translate(541,55)"><path d="M5 3.5h12L13 16.5H1z" fill="#f5ec5a" stroke="#333" stroke-width="1"/><circle cx="5" cy="3.5" r="1.3" fill="#e11"/><circle cx="17" cy="3.5" r="1.3" fill="#e11"/><circle cx="13" cy="16.5" r="1.3" fill="#e11"/><circle cx="1.5" cy="16.5" r="1.3" fill="#e11"/><path d="M11 7v8l2-2 1.5 3 1.2-.6-1.4-2.9 2.7-.3z" fill="#ddd" stroke="#222" stroke-width=".7"/></g><path d="M567.5 63.5h7l-3.5 4z" fill="#111"/><g transform="translate(580,55)"><rect x="2.5" y="4.5" width="15" height="12" fill="#f5ec5a" stroke="#222" stroke-width="1.2"/><path d="M5 8h4M7 6v4M5 13h4" stroke="#222" stroke-width="1.2"/><path d="M12 7v8l2-2 1.5 3 1.2-.6-1.4-2.9 2.7-.3z" fill="#ddd" stroke="#222" stroke-width=".7"/></g><path d="M604.5 52v27" stroke="#dedede" stroke-width="1"/><path d="M609.5 55v20" stroke="#b5b5b5" stroke-width="1.4" stroke-dasharray="1.5 2"/><g transform="translate(617,55)"><rect x="1.5" y="5.5" width="7" height="4" fill="#f5ec5a" stroke="#444"/><rect x="1.5" y="13.5" width="7" height="4" fill="#ddd" stroke="#444"/><rect x="9" y="1" width="10" height="8" fill="#f4f4f4" stroke="#555" stroke-width=".8"/><rect x="9" y="1" width="10" height="2.6" fill="#3548c0"/><path d="M9 16h5v-5" fill="none" stroke="#222" stroke-width="1.2"/><rect x="14" y="8" width="4" height="3" fill="#2c2"/><path d="M3 2l1 2 2-1-1 2 2 1-2 1" fill="#f2e33a" stroke="#c9b400" stroke-width=".5"/></g><g transform="translate(643,55)"><rect x="1.5" y="4.5" width="7" height="4" fill="#eee" stroke="#444"/><rect x="1.5" y="13.5" width="7" height="4" fill="#ddd" stroke="#444"/><rect x="9" y="1" width="10" height="8" fill="#f4f4f4" stroke="#555" stroke-width=".8"/><rect x="9" y="1" width="10" height="2.6" fill="#3548c0"/><path d="M9 16h5v-5" fill="none" stroke="#222" stroke-width="1.2"/><rect x="14" y="8" width="4" height="3" fill="#2c2"/></g><rect x="667" y="54.5" width="276" height="21" fill="#e5e7f4"/><rect x="672" y="59.5" width="11" height="11" fill="#c8f8fa"/><rect x="686" y="59.5" width="11" height="11" fill="#c47070"/><rect x="700" y="58" width="30" height="13" fill="#da5f5f"/><text x="704.5" y="69" font-size="11.5" fill="#fff" font-family="Liberation Sans">GZT</text><text x="735" y="69" font-size="11.5" fill="#000" font-family="Liberation Sans" letter-spacing="-.3">LK2</text><path d="M759.5 56v18" stroke="#f4f4fb"/><text x="766" y="69" font-size="12" fill="#000" font-family="Liberation Sans" letter-spacing="-.55">1.35 * LF1 + 1.50 * LF2</text><path d="M923 62.5l5 5 5-5" fill="none" stroke="#333" stroke-width="1.2"/><rect x="937" y="54.5" width="16" height="21" fill="#ececf6"/><rect x="954" y="54.5" width="15" height="21" fill="#ececf6"/><path d="M948 61v8l-4.5-4z" fill="#111"/><path d="M959 61v8l4.5-4z" fill="#111"/><g transform="translate(973,55)"><path d="M1 4h12L8.5 9.5V17l-3-2V9.5z" fill="#3c7fd0"/><path d="M10 1l7 7M17 1l-7 7" stroke="#e11" stroke-width="2.2"/></g><path d="M996.5 63.5h7l-3.5 4z" fill="#111"/><g transform="translate(1010,55)"><ellipse cx="14" cy="5" rx="5" ry="3.3" fill="#fff" stroke="#26307a" stroke-width="1.1"/><circle cx="14" cy="5" r="1.9" fill="#26307a"/><path d="M6 9a6 6 0 0 0 0 10" fill="none" stroke="#1a8a3a" stroke-width="2"/><path d="M8 11v7" stroke="#444" stroke-dasharray="1.5 1.5"/></g><g transform="translate(1037,55)"><text x="0" y="7" font-size="9" fill="#555" font-family="Liberation Sans" letter-spacing=".3">x.xx</text><path d="M8 9a6 6 0 0 0 0 10" fill="none" stroke="#999" stroke-width="1.5"/><path d="M10 10v8" stroke="#888" stroke-dasharray="1.5 1.5"/></g><g transform="translate(1062,55)"><ellipse cx="14" cy="5" rx="5" ry="3.3" fill="#fff" stroke="#26307a" stroke-width="1.1"/><circle cx="14" cy="5" r="1.9" fill="#26307a"/><path d="M1 18h17" stroke="#222" stroke-width="1.6"/><path d="M7 6v6" stroke="#2a60c8" stroke-width="2.2"/><path d="M3.5 11h7L7 16.5z" fill="#2a60c8"/></g><g transform="translate(1088,55)"><text x="2" y="7" font-size="9" fill="#555" font-family="Liberation Sans" letter-spacing=".3">x.xx</text><path d="M1 18h17" stroke="#888" stroke-width="1.6"/><path d="M7 8v5" stroke="#aaa" stroke-width="2.2"/><path d="M3.5 12h7L7 16.5z" fill="#aaa"/></g><g transform="translate(1113,55)"><path d="M3 6l5-2.5 5 2.5v10l-5 2.5-5-2.5z" fill="#cfcfcf" stroke="#aaa"/><path d="M8 8.5v10" stroke="#aaa"/><ellipse cx="14" cy="5" rx="5" ry="3.3" fill="#eee" stroke="#999" stroke-width="1.1"/><circle cx="14" cy="5" r="1.9" fill="#999"/></g><rect x="1138.5" y="54.0" width="24" height="22" rx="3.5" fill="#cce8ff" stroke="#99d1ff"/><rect x="1163.5" y="54.0" width="11" height="22" rx="3.5" fill="#cce8ff" stroke="#99d1ff"/><g transform="translate(1139,55)"><rect x="2" y="6" width="14" height="13" fill="#5b7fc2"/><path d="M2 10.5h14M2 15h14M6.5 6v13M11.5 6v13" stroke="#dfe8f8" stroke-width=".9"/><ellipse cx="14" cy="5" rx="5" ry="3.3" fill="#fff" stroke="#26307a" stroke-width="1.1"/><circle cx="14" cy="5" r="1.9" fill="#26307a"/></g><path d="M1164.5 63.5h7l-3.5 4z" fill="#111"/><rect x="1177.5" y="54.0" width="23" height="22" rx="3.5" fill="#cce8ff" stroke="#99d1ff"/><g transform="translate(1178,55)"><ellipse cx="14" cy="5" rx="5" ry="3.3" fill="#fff" stroke="#26307a" stroke-width="1.1"/><circle cx="14" cy="5" r="1.9" fill="#26307a"/><path d="M1 17L19 11v6z" fill="#e33"/><path d="M1 17L11 13.7V17z" fill="#24389a"/><path d="M1 17L19 11" stroke="#2a50c0" stroke-width="1.2"/></g><rect x="1202.5" y="54.0" width="25" height="22" rx="3.5" fill="#cce8ff" stroke="#99d1ff"/><g transform="translate(1204,55)"><text x="1" y="7" font-size="9" fill="#333" font-family="Liberation Sans" letter-spacing=".3">x.xx</text><path d="M1 17.5L19 11.5v6z" fill="#e33"/><path d="M1 17.5L11 14.2v3.3z" fill="#24389a"/><path d="M1 17.5L19 11.5" stroke="#2a50c0" stroke-width="1.2"/></g><path d="M1231.5 55v20" stroke="#9a9a9a" stroke-width="1"/><g transform="translate(1237,55)"><rect x="9" y="1" width="10" height="8" fill="#f4f4f4" stroke="#555" stroke-width=".8"/><rect x="9" y="1" width="10" height="2.6" fill="#d22"/><path d="M1 15L13 10v5z" fill="#e33"/><path d="M1 15L13 10" stroke="#2a50c0" stroke-width="1.6"/><circle cx="13" cy="15" r="3.5" fill="#7aa7ee" stroke="#3b6fd0"/><circle cx="13" cy="15" r="1.2" fill="#fff"/></g><g transform="translate(1262,55)"><path d="M4 9a4 4 0 0 1 4-5 5 5 0 0 1 8 1.5 3.5 3.5 0 0 1 0 6.5H5a3 3 0 0 1-1-3z" fill="#2aa3e6"/><path d="M1.5 6v13M18.5 6v13M1.5 16.5h17" stroke="#111" stroke-width="1.4"/><circle cx="6" cy="14" r="1.8" fill="#6a8cd8" stroke="#234"/><circle cx="10" cy="14" r="1.8" fill="#6a8cd8" stroke="#234"/><circle cx="14" cy="14" r="1.8" fill="#6a8cd8" stroke="#234"/></g><path d="M1287.5 63.5h7l-3.5 4z" fill="#111"/><path d="M1300.5 52v27" stroke="#dedede" stroke-width="1"/><path d="M1305.5 55v20" stroke="#b5b5b5" stroke-width="1.4" stroke-dasharray="1.5 2"/><g transform="translate(1312,55)"><circle cx="8" cy="8" r="5" fill="#f0f0f0" stroke="#555" stroke-width="1.8"/><path d="M11.5 11.5l6 6" stroke="#555" stroke-width="2.4"/><path d="M9 1l8 8M17 1l-8 8" stroke="#e11" stroke-width="2.2"/></g><g transform="translate(1338,55)"><path d="M2 7l5-3.5h11v10L13 17.5H2z" fill="#c9cfe6" stroke="#8c93b8"/><path d="M2 7h11l5-3.5M13 7v10.5" fill="none" stroke="#8c93b8"/></g><g transform="translate(1364,55)"><path d="M2 7l5-3.5h11v10L13 17.5H2z" fill="#c9cfe6" stroke="#8c93b8"/><path d="M2 7h11l5-3.5M13 7v10.5" fill="none" stroke="#8c93b8"/><path d="M9 12l6-8 2.5 2-6 8-3 1z" fill="#f5c46a" stroke="#a8701c" stroke-width=".7"/><path d="M15 4l1.2-1.5 2.5 2L17.5 6z" fill="#e99"/></g><g transform="translate(1389,55)"><path d="M8 4l4-2.5h7v7L15 11H8z" fill="#dfe3f2" stroke="#8c93b8"/><path d="M1 10l4-2.5h8v8L9 18.5H1z" fill="#e8ebf6" stroke="#8c93b8"/><path d="M1 10h8l4-2.5M9 10v8.5" fill="none" stroke="#8c93b8"/></g><path d="M1416.5 55v20" stroke="#9a9a9a" stroke-width="1"/><g transform="translate(1422,55)"><path d="M3 4h11" stroke="#1a9a3a" stroke-width="1.5"/><path d="M12.5 1l4 3-4 3z" fill="#1a9a3a"/><path d="M3 4v10" stroke="#1a3fd0" stroke-width="1.5"/><path d="M0 12.5h6l-3 5z" fill="#1a3fd0"/><circle cx="3" cy="4" r="2.3" fill="#f2d21a" stroke="#333" stroke-width=".5"/><text x="8" y="18" font-size="10.5" font-weight="bold" fill="#111" font-family="Liberation Sans">X</text></g><g transform="translate(1448,55)"><path d="M3 4h11" stroke="#d84315" stroke-width="1.5"/><path d="M12.5 1l4 3-4 3z" fill="#d84315"/><path d="M3 4v10" stroke="#1a3fd0" stroke-width="1.5"/><path d="M0 12.5h6l-3 5z" fill="#1a3fd0"/><circle cx="3" cy="4" r="2.3" fill="#1a9a3a" stroke="#333" stroke-width=".5"/><text x="8" y="18" font-size="10.5" font-weight="bold" fill="#111" font-family="Liberation Sans">-Y</text></g><g transform="translate(1474,55)"><path d="M3 4h11" stroke="#d84315" stroke-width="1.5"/><path d="M12.5 1l4 3-4 3z" fill="#d84315"/><path d="M3 4v10" stroke="#1a9a3a" stroke-width="1.5"/><path d="M0 12.5h6l-3 5z" fill="#1a9a3a"/><circle cx="3" cy="4" r="2.3" fill="#f2d21a" stroke="#333" stroke-width=".5"/><text x="8" y="18" font-size="10.5" font-weight="bold" fill="#111" font-family="Liberation Sans">Z</text></g><g transform="translate(1500,55)"><path d="M6 4h11" stroke="#1a9a3a" stroke-width="1.5"/><path d="M7.5 1l-4 3 4 3z" fill="#1a9a3a"/><path d="M17 4v10" stroke="#1a3fd0" stroke-width="1.5"/><path d="M14 12.5h6l-3 5z" fill="#1a3fd0"/><circle cx="17" cy="4" r="2.3" fill="#d84315" stroke="#333" stroke-width=".5"/><text x="0" y="18" font-size="10.5" font-weight="bold" fill="#111" font-family="Liberation Sans">-X</text></g><path d="M1526.5 63.5h7l-3.5 4z" fill="#111"/><g transform="translate(1539,55)"><rect x="2" y="1.5" width="8" height="8" fill="#f5ec5a" stroke="#999"/><path d="M11 9l4.5-6 2 1.5-4.5 6zM9 12a5 5 0 0 0 8 0" fill="#888" stroke="#666"/><path d="M4 18h14M11 18v-4" stroke="#666" stroke-width="2"/></g><path d="M1563.5 63.5h7l-3.5 4z" fill="#111"/><path d="M1578.5 55v20" stroke="#9a9a9a" stroke-width="1"/><text x="1586" y="69" font-size="13" fill="#444" font-family="Liberation Sans">»</text><g transform="translate(399,83)"><rect x="6" y="2" width="11" height="8" fill="#f4f4f4" stroke="#555" stroke-width=".8"/><rect x="6" y="2" width="11" height="2.6" fill="#3548c0"/><path d="M6 10h8l-1 8-7 2z" fill="#5a78b6"/></g><path d="M423.5 83v20" stroke="#9a9a9a" stroke-width="1"/><g transform="translate(427,83)"><path d="M10.5 2v16" stroke="#bbb" stroke-width="3"/><path d="M10.5 2v16" stroke="#eee" stroke-width="1.2"/><path d="M3 3l4 3M7 3L3 7M5 2v6" stroke="#bbb" stroke-width="1"/></g><path d="M454.5 91.5h7l-3.5 4z" fill="#666"/><path d="M468.5 83v20" stroke="#9a9a9a" stroke-width="1"/><g transform="translate(473,83)"><path transform="translate(1,0) scale(.8)" d="M6 0l1.3 3.6 3.8-.8-2.5 2.9 2.5 2.9-3.8-.8L6 11.4 4.7 7.8.9 8.6 3.4 5.7.9 2.8l3.8.8z" fill="#f2e33a" stroke="#c9b400" stroke-width=".5"/><path d="M10 6v8" stroke="#3a78d8" stroke-width="1.6"/><path d="M7.5 12.5h5L10 17z" fill="#3a78d8"/><circle cx="10" cy="18" r="1.5" fill="#e11"/></g><g transform="translate(500,83)"><path transform="translate(1,0) scale(.8)" d="M6 0l1.3 3.6 3.8-.8-2.5 2.9 2.5 2.9-3.8-.8L6 11.4 4.7 7.8.9 8.6 3.4 5.7.9 2.8l3.8.8z" fill="#f2e33a" stroke="#c9b400" stroke-width=".5"/><path d="M6 8v6" stroke="#3a78d8" stroke-width="1.3"/><path d="M4 13h4l-2 3.5z" fill="#3a78d8"/><path d="M11 8v6" stroke="#3a78d8" stroke-width="1.3"/><path d="M9 13h4l-2 3.5z" fill="#3a78d8"/><path d="M16 8v6" stroke="#3a78d8" stroke-width="1.3"/><path d="M14 13h4l-2 3.5z" fill="#3a78d8"/><path d="M3 18h15" stroke="#111" stroke-width="1.5"/><circle cx="3" cy="18" r="1.5" fill="#e11"/><circle cx="18" cy="18" r="1.5" fill="#e11"/><path d="M5 7.5h12" stroke="#3a78d8"/></g><g transform="translate(526,83)"><path d="M5 8v6" stroke="#aaa" stroke-width="1.3"/><path d="M3 13h4l-2 3.5z" fill="#aaa"/><path d="M10 8v6" stroke="#aaa" stroke-width="1.3"/><path d="M8 13h4l-2 3.5z" fill="#aaa"/><path d="M15 8v6" stroke="#aaa" stroke-width="1.3"/><path d="M13 13h4l-2 3.5z" fill="#aaa"/><path d="M2 18h16" stroke="#aaa" stroke-width="2"/><path d="M4 7.5h12" stroke="#aaa"/><path d="M5 3l2 2M7 3L5 5" stroke="#bbb"/></g><g transform="translate(552,83)"><path transform="translate(1,0) scale(.8)" d="M6 0l1.3 3.6 3.8-.8-2.5 2.9 2.5 2.9-3.8-.8L6 11.4 4.7 7.8.9 8.6 3.4 5.7.9 2.8l3.8.8z" fill="#f2e33a" stroke="#c9b400" stroke-width=".5"/><path d="M4 9l4-2h10v8l-4 3H4z" fill="#9bbdf0" stroke="#3a6fc8"/><path d="M4 9h10l4-2M14 9v9" fill="none" stroke="#3a6fc8"/><path d="M8 8v6" stroke="#3a78d8" stroke-width="1.3"/><path d="M6 13h4l-2 3.5z" fill="#3a78d8"/><path d="M14 8v6" stroke="#3a78d8" stroke-width="1.3"/><path d="M12 13h4l-2 3.5z" fill="#3a78d8"/><circle cx="4" cy="18" r="1.3" fill="#e11"/><circle cx="14" cy="18" r="1.3" fill="#e11"/></g><g transform="translate(578,83)"><path d="M4 3a14 14 0 0 1 8 14" fill="none" stroke="#aaa" stroke-width="1.4"/><path d="M2 5a14 14 0 0 1 6 12M6 2a14 14 0 0 1 9 12" fill="none" stroke="#bbb"/><path d="M12 13h6M15 13v5M12 18.5h6" stroke="#999" stroke-width="1.4"/></g><path d="M603.5 91.5h7l-3.5 4z" fill="#666"/><g transform="translate(615,83)"><path transform="translate(1,0) scale(.8)" d="M6 0l1.3 3.6 3.8-.8-2.5 2.9 2.5 2.9-3.8-.8L6 11.4 4.7 7.8.9 8.6 3.4 5.7.9 2.8l3.8.8z" fill="#f2e33a" stroke="#c9b400" stroke-width=".5"/><path d="M11 6v5" stroke="#3a78d8" stroke-width="1.6"/><path d="M8.5 10h5L11 14z" fill="#3a78d8"/><path d="M3 12l12-3 3 6-12 3z" fill="none" stroke="#2a8ae0" stroke-width="1.5" stroke-dasharray="2 1.5"/></g><path d="M641.5 91.5h7l-3.5 4z" fill="#111"/><path d="M653.5 80v27" stroke="#dedede" stroke-width="1"/><path d="M658.5 83v20" stroke="#b5b5b5" stroke-width="1.4" stroke-dasharray="1.5 2"/><g transform="translate(666,83)"><path d="M1 5h13L9.5 10.5V18l-3-2v-5.5z" fill="#3c7fd0"/><rect x="9" y="1" width="10" height="8" fill="#f4f4f4" stroke="#555" stroke-width=".8"/><rect x="9" y="1" width="10" height="2.6" fill="#3548c0"/></g><path d="M692.5 83v20" stroke="#9a9a9a" stroke-width="1"/><g transform="translate(699,83)"><path d="M2.5 2v16h16" fill="none" stroke="#222" stroke-width="1.3"/><path d="M4 16l4-7 3 3 4-7" fill="none" stroke="#86c5f2" stroke-width="1.3"/><rect x="9" y="1" width="10" height="8" fill="#f4f4f4" stroke="#555" stroke-width=".8"/><rect x="9" y="1" width="10" height="2.6" fill="#3548c0"/></g><rect x="723.5" y="82.5" width="25" height="21" rx="3.5" fill="#cce8ff" stroke="#99d1ff"/><g transform="translate(725,83)"><path d="M3.5 17V8a3 3 0 0 1 3-3h7a3 3 0 0 1 3 3v9" fill="none" stroke="#333" stroke-width="2.2"/><path d="M2 16a9 9 0 0 1 0-8M18 16a9 9 0 0 0 0-8" fill="none" stroke="#555" stroke-width=".8"/><circle cx="3.5" cy="17" r="1.6" fill="#e11"/><circle cx="16.5" cy="17" r="1.6" fill="#e11"/><circle cx="4" cy="6" r="1.5" fill="#e11"/><circle cx="16" cy="6" r="1.5" fill="#e11"/></g><g transform="translate(751,83)"><rect x="1.5" y="4" width="17" height="13" fill="#d8d8d8" stroke="#666"/><path d="M4 4v13M16 4v13" stroke="#666" stroke-width="2.5" stroke-dasharray="1.5 1.5"/><path d="M8 7.5v6l5-3z" fill="#555"/></g><path d="M777.5 83v20" stroke="#9a9a9a" stroke-width="1"/><g transform="translate(783,83)"><path d="M2 4q3 14 6 10t4-6 4 4 3-8" fill="none" stroke="#999" stroke-width="1.3"/><path d="M2 10h17" stroke="#bbb"/></g><g transform="translate(810,83)"><path d="M1 11l10-7 8 5-8 8z" fill="#2a5fe0"/><path d="M3 11l8-5.5 6 4-7 6z" fill="#19c7d8"/><path d="M5.5 11l6-4 4 3-5 4z" fill="#39d34a"/><path d="M8 11l4-2.5 2 1.5-3 2.5z" fill="#f0e23a"/><path d="M10 11l2-1.3 1 .8-1.6 1.3z" fill="#e33"/></g><g transform="translate(836,83)"><path d="M2 6l4-3h12v11l-4 4H2z" fill="#c9c9c9" stroke="#8a8a8a"/><path d="M2 6h12l4-3M14 6v12" fill="none" stroke="#8a8a8a"/><circle cx="8" cy="12" r="3" fill="#eee" stroke="#8a8a8a"/></g><g transform="translate(862,83)"><path d="M7 3l3.5 5h-2v3h-3V8h-2z" fill="#28b428"/><path d="M7 11.5l3.5 4h-2v3.5h-3V15.5h-2z" fill="#28b428"/><path d="M19 5h-4V3l-4 3.5 4 3.5V8h4z" fill="#28b428"/></g><rect x="886.5" y="82.5" width="25" height="21" rx="3.5" fill="#cce8ff" stroke="#99d1ff"/><g transform="translate(888,83)"><path d="M1 17L19 5c-1 4-6 9-18 12z" fill="#6a8ce8"/><path d="M1 17L19 5" stroke="#2a40c0" stroke-width="1.2"/></g><path d="M914.5 83v20" stroke="#9a9a9a" stroke-width="1"/><g transform="translate(921,83)"><path d="M3 7h14" stroke="#777" stroke-width="1.3"/><circle cx="3" cy="7" r="1.5" fill="#777"/><circle cx="17" cy="7" r="1.5" fill="#777"/><path d="M2 13h16" stroke="#888" stroke-width="1.2"/><path d="M3 16q3.5-6 7 0t7 0" fill="none" stroke="#888" stroke-width="1.2"/></g><g transform="translate(947,83)"><rect x="3" y="5" width="14" height="4" rx="2" fill="#bbb" stroke="#888"/><path d="M2 13h16" stroke="#888" stroke-width="1.2"/><path d="M3 16q3.5-6 7 0t7 0" fill="none" stroke="#888" stroke-width="1.2"/></g><g transform="translate(973,83)"><rect x="3" y="5" width="14" height="4" rx="2" fill="#999" stroke="#777" stroke-dasharray="2 1"/><path d="M2 13h16" stroke="#888" stroke-width="1.2"/><path d="M3 16q3.5-6 7 0t7 0" fill="none" stroke="#888" stroke-width="1.2"/></g><g transform="translate(999,83)"><path d="M3 4h14" stroke="#777" stroke-width="1.3"/><path d="M3 11l3-5 3 5zM11 11l3-5 3 5z" fill="#aaa" stroke="#888" stroke-width=".6"/><path d="M2 13h16" stroke="#888" stroke-width="1.2"/><path d="M3 16q3.5-6 7 0t7 0" fill="none" stroke="#888" stroke-width="1.2"/></g><g transform="translate(1025,83)"><path d="M3 12L18 3l-6 9z" fill="#bbb" stroke="#999" stroke-width=".6"/><path d="M2 13h16" stroke="#888" stroke-width="1.2"/><path d="M3 16q3.5-6 7 0t7 0" fill="none" stroke="#888" stroke-width="1.2"/></g><g transform="translate(1051,83)"><path transform="translate(1,0) scale(.8)" d="M6 0l1.3 3.6 3.8-.8-2.5 2.9 2.5 2.9-3.8-.8L6 11.4 4.7 7.8.9 8.6 3.4 5.7.9 2.8l3.8.8z" fill="#f2e33a" stroke="#c9b400" stroke-width=".5"/><rect x="9" y="1" width="10" height="8" fill="#f4f4f4" stroke="#555" stroke-width=".8"/><rect x="9" y="1" width="10" height="2.6" fill="#3548c0"/><path d="M2 18L14 8l2 3z" fill="#6a8ce8"/><path d="M10 10l6-1" stroke="#3a6fc8"/></g><g transform="translate(1076,83)"><path d="M10 2v11" stroke="#e0a020" stroke-width="1.2"/><circle cx="10" cy="15" r="3" fill="#e81ee0"/></g><path d="M1103.5 83v20" stroke="#9a9a9a" stroke-width="1"/><g transform="translate(1110,83)"><path d="M2 2v16h16z" fill="#e22"/><path d="M2 6v12h12z" fill="#f0e23a"/><path d="M2 10v8h8z" fill="#28c828"/><path d="M2 14v4h4z" fill="#2a50e0"/><path d="M2 2v16h16" fill="none" stroke="#222" stroke-width="1.2"/><path d="M11 10l6-8 2.5 2-6 8-3 1z" fill="#f5c46a" stroke="#a8701c" stroke-width=".7"/></g><path d="M1134.5 91.5h7l-3.5 4z" fill="#111"/><path d="M1147.5 80v27" stroke="#dedede" stroke-width="1"/><path d="M1152.5 83v20" stroke="#b5b5b5" stroke-width="1.4" stroke-dasharray="1.5 2"/><g transform="translate(1158,83)"><path d="M2 6h16M2 9h16M2 12h16M2 15h16M2 18h16" stroke="#444" stroke-width="1.3" stroke-dasharray="1.5 1.8"/><rect x="9" y="1" width="10" height="8" fill="#f4f4f4" stroke="#555" stroke-width=".8"/><rect x="9" y="1" width="10" height="2.6" fill="#3548c0"/></g><g transform="translate(1184,83)"><path d="M2 3h16M2 7h16M2 15h16M2 18.5h16" stroke="#555" stroke-width="1.2" stroke-dasharray="1.3 2.2"/><circle cx="10" cy="11" r="3.5" fill="none" stroke="#1a2fb0" stroke-width="1.6"/><path d="M10 4v14M3 11h14" stroke="#1a2fb0" stroke-width="1.5"/></g><rect x="1209.5" y="82.5" width="25" height="21" rx="3.5" fill="#cce8ff" stroke="#99d1ff"/><g transform="translate(1211,83)"><rect x="5" y="4" width="11" height="11" fill="#a9c9ee" stroke="#5a7ab0" stroke-width=".7"/><path d="M8.5 18V6l4-4.5v12z" fill="#a9c9ee" stroke="#5a7ab0" stroke-width=".7"/><path d="M1 13.5L7 8.5h12L13 13.5z" fill="#e8343a" stroke="#5a7ab0" stroke-width=".7"/></g><g transform="translate(1237,83)"><rect x="5" y="4" width="11" height="11" fill="#a9c9ee" stroke="#5a7ab0" stroke-width=".7"/><path d="M1 13.5L7 8.5h12L13 13.5z" fill="#a9c9ee" stroke="#5a7ab0" stroke-width=".7"/><path d="M8.5 18V6l4-4.5v12z" fill="#e8343a" stroke="#5a7ab0" stroke-width=".7"/></g><g transform="translate(1263,83)"><path d="M1 13.5L7 8.5h12L13 13.5z" fill="#a9c9ee" stroke="#5a7ab0" stroke-width=".7"/><path d="M8.5 18V6l4-4.5v12z" fill="#a9c9ee" stroke="#5a7ab0" stroke-width=".7"/><rect x="5" y="4" width="11" height="11" fill="#e8343a" stroke="#5a7ab0" stroke-width=".7"/></g><path d="M1289.5 83v20" stroke="#9a9a9a" stroke-width="1"/><g transform="translate(1296,83)"><circle cx="4" cy="5" r="2" fill="none" stroke="#aaa" stroke-width="1.2"/><path d="M7 6l6 5M13 11l-3-.5M13 11l-.5-3" stroke="#aaa" stroke-width="1.1"/><circle cx="11" cy="13" r="2" fill="none" stroke="#aaa" stroke-width="1.2"/><circle cx="14" cy="16" r="2" fill="none" stroke="#aaa" stroke-width="1.2"/></g><g transform="translate(1322,83)"><path d="M10 1v18" stroke="#aaa" stroke-dasharray="2 1.5"/><ellipse cx="10" cy="10" rx="7" ry="4" fill="none" stroke="#aaa" stroke-width="1.5" stroke-dasharray="30 8"/><path d="M5 15l-3-2.5 4-1z" fill="#aaa"/></g><g transform="translate(1348,83)"><path d="M10 1v18" stroke="#aaa" stroke-dasharray="2 1.5"/><path d="M8 3v14H2zM12 3v14h6z" fill="#e6e6e6" stroke="#aaa"/></g><g transform="translate(1374,83)"><path d="M3 3l14 14M17 3L3 17" stroke="#111" stroke-width="1.5"/><circle cx="10" cy="10" r="2.5" fill="#e11"/><circle cx="3" cy="3" r="1.6" fill="#e11"/><circle cx="17" cy="3" r="1.6" fill="#e11"/><circle cx="3" cy="17" r="1.6" fill="#e11"/><circle cx="17" cy="17" r="1.6" fill="#e11"/></g><g transform="translate(1400,83)"><rect x="2" y="4.5" width="16" height="13" rx="2" fill="#f0f0f0" stroke="#333" stroke-width="1.3"/><path d="M5 4.5V2.5h5v2" fill="none" stroke="#333"/><path d="M2 7.5h16" stroke="#333" stroke-dasharray="2 1.5"/><circle cx="10" cy="12" r="3" fill="none" stroke="#333" stroke-width="1.6" stroke-dasharray="2 1"/><circle cx="10" cy="12" r="1" fill="#333"/></g><g transform="translate(10,1160)"><rect x="10" y="2" width="9" height="7" fill="#f0f0f0" stroke="#555" stroke-width=".8"/><rect x="10" y="2" width="9" height="2.3" fill="#3548c0"/><path d="M10 14V7" stroke="#1a3fd0" stroke-width="1.5"/><path d="M10 14l-6 3" stroke="#1a9a3a" stroke-width="1.5"/><path d="M2 18l2.5-3.5 2 3z" fill="#1a9a3a"/><path d="M10 14l6 1" stroke="#e04a1a" stroke-width="1.5"/><path d="M19 15.5l-4 2 .5-4z" fill="#e04a1a"/><circle cx="10" cy="14" r="1.8" fill="#f2d21a"/></g><rect x="27" y="1160" width="124" height="21" fill="#e5e7f4"/><rect x="31" y="1164.5" width="12" height="12" fill="#c8f8fa"/><text x="47" y="1174" font-size="12" fill="#000" font-family="Liberation Sans" letter-spacing="-.9" word-spacing="1.2">1 - Global XYZ</text><path d="M138 1167.5l5 5 5-5" fill="none" stroke="#333" stroke-width="1.2"/><path d="M155.5 1160v20" stroke="#9a9a9a" stroke-width="1"/><g transform="translate(160,1160)"><rect x="3" y="5" width="12" height="11" fill="#9ab8e8" stroke="#2a4a90"/><rect x="6" y="8" width="6" height="5" fill="#dfe8f8" stroke="#2a4a90" stroke-width=".7"/><path d="M1 3h5M1 3v5M19 3h-5M19 3v5M1 18h5M1 18v-5" stroke="#222" fill="none"/></g><g transform="translate(184,1160)"><path d="M3 8l4-3h10l-4 3z" fill="#6a8ce8" stroke="#2a4a90"/><path d="M8 9v8M12 9v8" stroke="#2a4a90" stroke-width="1.5"/><path d="M2 4h5M2 4v4" stroke="#222" fill="none"/></g><g transform="translate(208,1160)"><path d="M4 8h9l3-3H7z" fill="#9ab8e8" stroke="#2a4a90"/><path d="M4 8v7h9V8M13 15l3-3V5" fill="#5a7ad0" stroke="#2a4a90"/><path d="M15 3h4v4" stroke="#222" fill="none"/></g><g transform="translate(233,1160)"><rect x="3" y="5" width="12" height="11" fill="#9ab8e8" stroke="#2a4a90"/><rect x="6" y="8" width="6" height="5" fill="#dfe8f8" stroke="#2a4a90" stroke-width=".7"/><path d="M2 3h4M2 3v4M18 17h-4M18 17v-4" stroke="#222" fill="none"/></g><g transform="translate(257,1160)"><rect x="5" y="4" width="11" height="13" fill="#9ab8e8" stroke="#2a4a90"/><path d="M5 8.5h11M5 12.5h11M10.5 4v13" stroke="#2a4a90" stroke-width=".8"/><path d="M1 2h4M1 2v16h4" stroke="#222" fill="none"/></g><path d="M282.5 1160v20" stroke="#9a9a9a" stroke-width="1"/><g transform="translate(287,1160)"><path transform="translate(1,0) scale(.8)" d="M6 0l1.3 3.6 3.8-.8-2.5 2.9 2.5 2.9-3.8-.8L6 11.4 4.7 7.8.9 8.6 3.4 5.7.9 2.8l3.8.8z" fill="#f2e33a" stroke="#c9b400" stroke-width=".5"/><rect x="5" y="8" width="12" height="9" fill="#ddd" stroke="#444"/><path d="M5 11h12M5 14h12" stroke="#444" stroke-width=".8"/></g><g transform="translate(311,1160)"><path transform="translate(1,0) scale(.8)" d="M6 0l1.3 3.6 3.8-.8-2.5 2.9 2.5 2.9-3.8-.8L6 11.4 4.7 7.8.9 8.6 3.4 5.7.9 2.8l3.8.8z" fill="#f2e33a" stroke="#c9b400" stroke-width=".5"/><rect x="5" y="8" width="12" height="9" fill="#ddd" stroke="#444"/><path d="M5 11h12M5 14h12" stroke="#444" stroke-width=".8"/><path d="M9 8v9M13 8v9" stroke="#444" stroke-width=".8"/></g><g transform="translate(335,1160)"><path transform="translate(1,0) scale(.8)" d="M6 0l1.3 3.6 3.8-.8-2.5 2.9 2.5 2.9-3.8-.8L6 11.4 4.7 7.8.9 8.6 3.4 5.7.9 2.8l3.8.8z" fill="#f2e33a" stroke="#c9b400" stroke-width=".5"/><path d="M3 17h15M3 14v5M18 14v5" stroke="#222" stroke-width="1.3"/><text x="8" y="14" font-size="7" font-family="Liberation Sans" fill="#222">x</text></g><path d="M358.5 1168.5h7l-3.5 4z" fill="#111"/><g transform="translate(371,1160)"><path transform="translate(1,0) scale(.8)" d="M6 0l1.3 3.6 3.8-.8-2.5 2.9 2.5 2.9-3.8-.8L6 11.4 4.7 7.8.9 8.6 3.4 5.7.9 2.8l3.8.8z" fill="#f2e33a" stroke="#c9b400" stroke-width=".5"/><path d="M5 17h13" stroke="#222" stroke-width="1.3"/><text x="8" y="15" font-size="8" font-weight="bold" font-family="Liberation Sans" fill="#222">xx</text></g><g transform="translate(395,1160)"><path transform="translate(1,0) scale(.8)" d="M6 0l1.3 3.6 3.8-.8-2.5 2.9 2.5 2.9-3.8-.8L6 11.4 4.7 7.8.9 8.6 3.4 5.7.9 2.8l3.8.8z" fill="#f2e33a" stroke="#c9b400" stroke-width=".5"/><path d="M8 18l3-12 3 12M6 13l9-4" stroke="#555" stroke-width="1.3" fill="none"/></g><g transform="translate(419,1160)"><path transform="translate(1,0) scale(.8)" d="M6 0l1.3 3.6 3.8-.8-2.5 2.9 2.5 2.9-3.8-.8L6 11.4 4.7 7.8.9 8.6 3.4 5.7.9 2.8l3.8.8z" fill="#f2e33a" stroke="#c9b400" stroke-width=".5"/><rect x="4" y="7" width="13" height="11" fill="#f4f4f4" stroke="#444"/><rect x="9" y="4" width="8" height="3" fill="#3548c0"/></g><path d="M445.5 1160v20" stroke="#9a9a9a" stroke-width="1"/><g transform="translate(450,1160)"><path d="M3 15l6-8 6 3" fill="none" stroke="#222" stroke-width="1.5" stroke-dasharray="3 1.5"/><circle cx="3" cy="15" r="1.5" fill="#e11"/><circle cx="15" cy="10" r="1.5" fill="#e11"/></g><path d="M474.5 1168.5h7l-3.5 4z" fill="#111"/><g transform="translate(482,1160)"><text x="1" y="8" font-size="8.5" font-weight="bold" font-family="Liberation Sans" fill="#111">2</text><text x="10" y="19" font-size="8.5" font-weight="bold" font-family="Liberation Sans" fill="#111">6</text><path d="M8 4q6 0 6 6" fill="none" stroke="#3a78d8" stroke-width="1.5"/><path d="M11.5 9h5l-2.5 3.5z" fill="#3a78d8"/><rect x="1" y="12" width="5" height="6" fill="#3a78d8"/></g><path d="M510.5 1168.5h7l-3.5 4z" fill="#111"/><path d="M526.5 1160v20" stroke="#9a9a9a" stroke-width="1"/><g transform="translate(529,1160)"><path d="M6 2v16M12 2v16" stroke="#222" stroke-width="1.3"/><circle cx="6" cy="3" r="1.5" fill="#e11"/><circle cx="6" cy="17" r="1.5" fill="#e11"/></g><g transform="translate(553,1160)"><path d="M5 2l3 16M15 2l-3 16" stroke="#222" stroke-width="1.3"/><circle cx="5" cy="3" r="1.5" fill="#e11"/></g><g transform="translate(577,1160)"><path d="M2 17L17 6" stroke="#222" stroke-dasharray="3 2"/><path d="M3 5l14 3" stroke="#e33"/><circle cx="17" cy="8" r="1.5" fill="#e11"/></g><path d="M601.5 1168.5h7l-3.5 4z" fill="#111"/><g transform="translate(612,1160)"><path d="M3 17l6-9 9-4" fill="none" stroke="#222" stroke-width="1.4"/><circle cx="3" cy="17" r="1.5" fill="#e11"/><circle cx="18" cy="4" r="1.5" fill="#e11"/></g><g transform="translate(637,1160)"><path d="M4 17Q4 5 17 4" fill="none" stroke="#222" stroke-width="1.4"/><circle cx="4" cy="17" r="1.5" fill="#e11"/><circle cx="17" cy="4" r="1.5" fill="#e11"/></g><g transform="translate(661,1160)"><path d="M2 15L15 2M6 18L19 5" stroke="#222" stroke-width="1.3"/><path d="M6 8l6 6" stroke="#e33"/></g><g transform="translate(685,1160)"><path d="M3 17L17 3" stroke="#222" stroke-width="1.3"/><path d="M6 7l6 6" stroke="#222"/><circle cx="3" cy="17" r="1.5" fill="#e11"/><circle cx="17" cy="3" r="1.5" fill="#e11"/></g><g transform="translate(709,1160)"><path d="M3 17L17 3M7 19L19 7" stroke="#222" stroke-width="1.3"/><circle cx="3" cy="17" r="1.5" fill="#e11"/><circle cx="17" cy="3" r="1.5" fill="#e11"/></g><g transform="translate(733,1160)"><path d="M3 7l5-4 4 3 6-2-2 7 2 5-7-1-4 3-1-6z" fill="none" stroke="#555" stroke-width="1.2"/></g><g transform="translate(757,1160)"><path d="M4 5h12v10H4z" fill="none" stroke="#222" stroke-width="1.2"/><circle cx="4" cy="5" r="1.5" fill="#e11"/><circle cx="16" cy="5" r="1.5" fill="#e11"/><circle cx="4" cy="15" r="1.5" fill="#e11"/><circle cx="16" cy="15" r="1.5" fill="#e11"/><circle cx="10" cy="10" r="1.5" fill="#e11"/></g><g transform="translate(781,1160)"><path d="M3 17L15 5" stroke="#999" stroke-width="1.3"/><circle cx="15" cy="5" r="1.5" fill="#e11"/><path d="M12 9l6 6" stroke="#999"/></g><path d="M808.5 1160v20" stroke="#9a9a9a" stroke-width="1"/><g transform="translate(813,1160)"><path d="M3 14l7-9 6 6-5 5z" fill="none" stroke="#222" stroke-width="1.3" stroke-dasharray="3 1.5"/><path d="M12 16h5M14.5 12v7" stroke="#222"/></g><path d="M837.5 1168.5h7l-3.5 4z" fill="#111"/><g transform="translate(849,1160)"><path d="M3 17L17 3" stroke="#3a78d8" stroke-width="3" opacity=".6"/><path d="M5 13l2 2M8 10l2 2M11 7l2 2" stroke="#555"/><circle cx="3" cy="17" r="1.5" fill="#e11"/><circle cx="17" cy="3" r="1.5" fill="#e11"/></g><g transform="translate(873,1160)"><path d="M3 17L17 3" stroke="#3a78d8" stroke-width="2.5" opacity=".6"/><path d="M6 10l4 4" stroke="#555"/><circle cx="3" cy="17" r="1.5" fill="#e11"/><circle cx="17" cy="3" r="1.5" fill="#e11"/></g><g transform="translate(897,1160)"><path d="M3 17L17 3" stroke="#3a78d8" stroke-width="2.5" opacity=".6"/><path d="M3 17L17 3" stroke="#222" stroke-width=".8"/><circle cx="3" cy="17" r="1.5" fill="#e11"/><circle cx="17" cy="3" r="1.5" fill="#e11"/></g><g transform="translate(921,1160)"><path d="M4 6l6 4 6-4M4 14l6-4 6 4" stroke="#e33" stroke-dasharray="2 1.5" fill="none"/><circle cx="4" cy="6" r="1.5" fill="#e11"/><circle cx="16" cy="6" r="1.5" fill="#e11"/><circle cx="4" cy="14" r="1.5" fill="#e11"/><circle cx="16" cy="14" r="1.5" fill="#e11"/><circle cx="10" cy="10" r="1.5" fill="#e11"/></g><rect x="964.5" y="1159.5" width="23" height="21" rx="3.5" fill="#cce8ff" stroke="#99d1ff"/><g transform="translate(965,1160)"><path d="M3 7h12M3 10h12M3 13h12M3 16h12M3 19h12" stroke="#555" stroke-width="1.2" stroke-dasharray="1.2 1.8"/><g transform="translate(-2,0)"><ellipse cx="14" cy="5" rx="5" ry="3.3" fill="#fff" stroke="#26307a" stroke-width="1.1"/><circle cx="14" cy="5" r="1.9" fill="#26307a"/></g></g><g transform="translate(995,1160)"><path d="M3 7h12M3 10h12M3 13h12M3 16h12M3 19h12" stroke="#555" stroke-width="1.2" stroke-dasharray="1.2 1.8"/><path transform="translate(1,0) scale(.8)" d="M6 0l1.3 3.6 3.8-.8-2.5 2.9 2.5 2.9-3.8-.8L6 11.4 4.7 7.8.9 8.6 3.4 5.7.9 2.8l3.8.8z" fill="#f2e33a" stroke="#c9b400" stroke-width=".5"/><rect x="10" y="2" width="8" height="6" fill="#f4f4f4" stroke="#555" stroke-width=".7"/><rect x="10" y="2" width="8" height="2" fill="#3548c0"/></g><rect x="1019.5" y="1159.5" width="23" height="21" rx="3.5" fill="#cce8ff" stroke="#99d1ff"/><g transform="translate(1021,1160)"><path d="M3 7h12M3 10h12M3 13h12M3 16h12M3 19h12" stroke="#555" stroke-width="1.2" stroke-dasharray="1.2 1.8"/><g transform="translate(-2,0)"><ellipse cx="14" cy="5" rx="5" ry="3.3" fill="#fff" stroke="#26307a" stroke-width="1.1"/><circle cx="14" cy="5" r="1.9" fill="#26307a"/></g></g><g transform="translate(1050,1160)"><rect x="4" y="7" width="12" height="11" fill="none" stroke="#555" stroke-dasharray="1.5 1.5"/><path transform="translate(1,0) scale(.8)" d="M6 0l1.3 3.6 3.8-.8-2.5 2.9 2.5 2.9-3.8-.8L6 11.4 4.7 7.8.9 8.6 3.4 5.7.9 2.8l3.8.8z" fill="#f2e33a" stroke="#c9b400" stroke-width=".5"/></g><rect x="1074.5" y="1159.5" width="24" height="21" rx="3.5" fill="#cce8ff" stroke="#99d1ff"/><g transform="translate(1076,1160)"><rect x="3" y="8" width="13" height="10" fill="none" stroke="#555" stroke-dasharray="1.5 1.5"/><g transform="translate(-2,0)"><ellipse cx="14" cy="5" rx="5" ry="3.3" fill="#fff" stroke="#26307a" stroke-width="1.1"/><circle cx="14" cy="5" r="1.9" fill="#26307a"/></g></g><g transform="translate(1111,1160)"><path d="M5 3v13h12M5 10h6v6" fill="none" stroke="#555" stroke-width="1.2"/></g><rect x="1142.5" y="1159.5" width="23" height="21" rx="3.5" fill="#cce8ff" stroke="#99d1ff"/><g transform="translate(1143,1160)"><path d="M3 7h12M3 10h12M3 13h12M3 16h12M3 19h12" stroke="#555" stroke-width="1.2" stroke-dasharray="1.2 1.8"/><path d="M8 12V8a4 4 0 0 1 8 0v4" fill="none" stroke="#e33" stroke-width="2.5"/><rect x="11" y="5" width="6" height="5" fill="#3548c0" opacity=".7"/></g><rect x="1166.5" y="1159.5" width="23" height="21" rx="3.5" fill="#cce8ff" stroke="#99d1ff"/><g transform="translate(1167,1160)"><path d="M5 16V9a5 5 0 0 1 10 0v7" fill="none" stroke="#3a6fd0" stroke-width="3"/><rect x="3.5" y="14" width="3" height="3" fill="#e11"/><rect x="13.5" y="14" width="3" height="3" fill="#e11"/></g><rect x="1190.5" y="1159.5" width="23" height="21" rx="3.5" fill="#cce8ff" stroke="#99d1ff"/><g transform="translate(1191,1160)"><rect x="5.5" y="5.5" width="9" height="9" fill="none" stroke="#333" stroke-width="1.3"/></g><rect x="1214.5" y="1159.5" width="23" height="21" rx="3.5" fill="#cce8ff" stroke="#99d1ff"/><g transform="translate(1215,1160)"><circle cx="10" cy="10" r="5.5" fill="none" stroke="#333" stroke-width="1.3"/><path d="M6 6l8 8M14 6l-8 8" stroke="#333"/></g><rect x="1238.5" y="1159.5" width="23" height="21" rx="3.5" fill="#cce8ff" stroke="#99d1ff"/><g transform="translate(1239,1160)"><rect x="5" y="5" width="10" height="10" fill="none" stroke="#333" stroke-width="1.3"/><path d="M5 5l10 10M15 5L5 15" stroke="#333"/></g><rect x="1262.5" y="1159.5" width="23" height="21" rx="3.5" fill="#cce8ff" stroke="#99d1ff"/><g transform="translate(1263,1160)"><path d="M5 4v11h11M5 9h6v6" fill="none" stroke="#333" stroke-width="1.3"/></g><rect x="1286.5" y="1159.5" width="23" height="21" rx="3.5" fill="#cce8ff" stroke="#99d1ff"/><g transform="translate(1287,1160)"><path d="M4 16L16 4" stroke="#333" stroke-width="1.3"/><path d="M8 9l3 3" stroke="#333"/></g><g transform="translate(1311,1160)"><path d="M4 14L14 5M7 17L17 8" stroke="#555" stroke-width="1.2"/></g><g transform="translate(1334,1160)"><path d="M4 4h12" stroke="#555" stroke-width="1.3"/><circle cx="10" cy="11" r="5" fill="none" stroke="#555" stroke-width="1.3"/></g><g transform="translate(1358,1160)"><circle cx="10" cy="10" r="6" fill="none" stroke="#555" stroke-width="1.3"/><circle cx="10" cy="10" r="3.5" fill="none" stroke="#555"/></g><g transform="translate(1382,1160)"><path d="M3 7l11 9M6 5l11 9M15 4L5 16" stroke="#777" stroke-width="1"/></g><g transform="translate(1406,1160)"><path d="M3 12l14-6M8 4l4 12M12 5l-6 9" stroke="#555" stroke-width="1"/></g><g transform="translate(1430,1160)"><path d="M3 5l14 9M3 14L17 6" stroke="#777" stroke-width="1" stroke-dasharray="3 1.5"/></g><g transform="translate(1454,1160)"><path d="M4 15L16 4M5 6l10 10M10 3v14" stroke="#888" stroke-width="1" stroke-dasharray="1.2 1.8"/></g><rect x="1478.5" y="1159.5" width="23" height="21" rx="3.5" fill="#cce8ff" stroke="#99d1ff"/><g transform="translate(1479,1160)"><path d="M3 4h14M3 7h14M3 10h14M3 13h14M3 16h14" stroke="#555" stroke-width="1.1" stroke-dasharray="1.1 1.6"/></g><rect x="1502.5" y="1159.5" width="23" height="21" rx="3.5" fill="#cce8ff" stroke="#99d1ff"/><g transform="translate(1503,1160)"><rect x="3.5" y="4.5" width="13" height="12" fill="none" stroke="#444" stroke-dasharray="2 1.5"/></g><rect x="1526.5" y="1159.5" width="23" height="21" rx="3.5" fill="#cce8ff" stroke="#99d1ff"/><g transform="translate(1527,1160)"><path d="M4 8l4-3h9l-4 3zM4 12l4-3h9l-4 3zM4 16l4-3h9l-4 3z" fill="#ddd" stroke="#444" stroke-width=".9"/></g><rect x="1550.5" y="1159.5" width="23" height="21" rx="3.5" fill="#cce8ff" stroke="#99d1ff"/><g transform="translate(1551,1160)"><rect x="5" y="8.5" width="10" height="3" fill="#555"/><circle cx="4.5" cy="8" r="1.2" fill="#f00"/><circle cx="15.5" cy="8" r="1.2" fill="#f00"/><circle cx="4.5" cy="12" r="1.2" fill="#f00"/><circle cx="15.5" cy="12" r="1.2" fill="#f00"/></g><rect x="1574.5" y="1159.5" width="23" height="21" rx="3.5" fill="#cce8ff" stroke="#99d1ff"/><g transform="translate(1575.5,1160)"><path d="M10 5v6" stroke="#444" stroke-width="1.3"/><path d="M8 9.5h4" stroke="#888" stroke-width="1"/><rect x="8" y="12" width="4" height="4" fill="#fff" stroke="#444" stroke-width="1.3"/></g><rect x="42.5" y="1130.5" width="305" height="24.5" fill="#f7f7f7"/><path d="M42.5 1130.5H347" stroke="#c9c9d6"/><path d="M42.5 1130.5h115v23h-115z" fill="#eeeeee" stroke="#c6c6d4"/><path d="M80.5 1130.5v23M118.5 1130.5v23" stroke="#c6c6d4"/><path d="M3 1155.5h345" stroke="#c8c8c8"/><g transform="translate(11,1132)"><rect x="7" y="3" width="12" height="9" fill="#f4f4f4" stroke="#666" stroke-width=".8"/><rect x="7" y="3" width="12" height="2.5" fill="#4a8ae8"/><path d="M3 7h5l1.5 1.5H15v6H3z" fill="#f2c94a" stroke="#b88a2a" stroke-width=".7"/><path d="M9 14q4-6 9-3l-1 5q-3-3-6 1z" fill="#8ec0ee" stroke="#2a5aa0" stroke-width=".7"/><circle cx="9" cy="14" r="1" fill="#e11"/><circle cx="18" cy="11" r="1" fill="#e11"/><circle cx="14" cy="18" r="1" fill="#e11"/></g><g transform="translate(50,1132)"><ellipse cx="10" cy="10" rx="7" ry="4.5" fill="#fff" stroke="#26307a" stroke-width="1.3"/><circle cx="10" cy="10" r="2.5" fill="#26307a"/></g><g transform="translate(88,1132)"><rect x="2" y="5" width="12" height="10" rx="1.5" fill="#555"/><path d="M14 9l5-3v8l-5-3z" fill="#555"/></g><g transform="translate(127,1132)"><path d="M2 11.5h16" stroke="#222" stroke-width="1"/><path d="M2 12v3.5l8-3.5z" fill="#2440b0"/><path d="M10 11L18 7.5V11z" fill="#e33"/></g><path d="M1596 1197l1-1M1592 1197l5-5M1588 1197l9-9" stroke="#aaa" stroke-dasharray="1.5 1.5"/><path d="M7.5 56v18M7.5 83v18" stroke="#b5b5b5" stroke-width="1.4" stroke-dasharray="1.5 2"/><path d="M13 62l4-2v5zM13 89l4-2v5z" fill="#f2e33a" stroke="#c9b400" stroke-width=".5"/></svg><div class="menu" style="left:18px;top:50px;width:388px;height:750px">
<div class="mi" style="top:2px;left:1px;width:383px;"><span class="l">Neu...</span><span class="s">Strg+N</span></div>
<div class="mi" style="top:24px;left:1px;width:383px;"><span class="l">Öffnen...</span><span class="s">Strg+O</span></div>
<div class="mi" style="top:46px;left:1px;width:383px;"><span class="l">Schließen</span><span class="s">Strg+W</span></div>
<div class="sep" style="left:6px;top:71px;width:375px"></div>
<div class="mi" style="top:75px;left:1px;width:383px;"><span class="l">Speichern</span><span class="s">Strg+S</span></div>
<div class="mi" style="top:97px;left:1px;width:383px;"><span class="l">Speichern unter...</span><span class="s">Strg+Shift+S</span></div>
<div class="mi" style="top:119px;left:1px;width:383px;"><span class="l">Als Vorlage speichern...</span></div>
<div class="mi" style="top:141px;left:1px;width:383px;"><span class="l">Speichern als Version</span></div>
<div class="mi" style="top:163px;left:1px;width:383px;"><span class="l">Alle speichern</span></div>
<div class="sep" style="left:6px;top:188px;width:375px"></div>
<div class="mi" style="top:192px;left:1px;width:383px;"><span class="l" style="letter-spacing:-0.17px">Modell per E-Mail senden</span></div>
<div class="sep" style="left:6px;top:217px;width:375px"></div>
<div class="mi" style="top:221px;left:1px;width:383px;"><span class="l" style="letter-spacing:-0.15px">Sofort ausdrucken</span><span class="s">Strg+P</span></div>
<div class="mi" style="top:243px;left:1px;width:383px;"><span class="l" style="letter-spacing:-0.05px">In das Ausdrucksprotokoll</span></div>
<div class="mi" style="top:265px;left:1px;width:383px;"><span class="l">In PDF drucken</span></div>
<div class="mi" style="top:287px;left:1px;width:383px;"><span class="l">In 3D-PDF drucken</span></div>
<div class="mi" style="top:309px;left:1px;width:383px;"><span class="l" style="letter-spacing:-0.17px">In Zwischenablage kopieren</span></div>
<div class="mi" style="top:331px;left:1px;width:383px;"><span class="l" style="letter-spacing:-0.15px">Druck als Datei</span></div>
<div class="sep" style="left:6px;top:356px;width:375px"></div>
<div class="mi" style="top:360px;left:1px;width:383px;"><span class="l" style="letter-spacing:-0.03px">Neues Ausdruckprotokoll</span></div>
<div class="mi" style="top:382px;left:1px;width:383px;"><span class="l" style="letter-spacing:-0.03px">Aktuelles Ausdruckprotokoll</span></div>
<div class="sep" style="left:6px;top:407px;width:375px"></div>
<div class="mi" style="top:411px;left:1px;width:383px;"><span class="l">Dlubal Center...</span></div>
<div class="mi" style="top:433px;left:1px;width:383px;"><span class="l">Blockmanager...</span></div>
<div class="mi" style="top:455px;left:1px;width:383px;"><span class="l">Als Block speichern...</span><span class="s">Strg+B</span></div>
<div class="mi" style="top:477px;left:1px;width:383px;"><span class="l">Block aus Blockmanager einfügen...</span><span class="s">Strg+K</span></div>
<div class="mi" style="top:499px;left:1px;width:383px;"><span class="l">Modell als Block einfügen...</span></div>
<div class="sep" style="left:6px;top:524px;width:375px"></div>
<div class="mi" style="top:528px;left:1px;width:383px;"><span class="l">Basisangaben...</span></div>
<div class="sep" style="left:6px;top:553px;width:375px"></div>
<div class="mi" style="top:557px;left:1px;width:383px;background:#91c9f7;"><span class="l">Exportieren</span></div>
<div class="mi" style="top:579px;left:1px;width:383px;"><span class="l">Importieren</span></div>
<div class="sep" style="left:6px;top:604px;width:375px"></div>
<div class="mi" style="top:608px;left:1px;width:383px;"><span class="l b">Gewölbe_Rundbogen_m03.rf6</span></div>
<div class="mi" style="top:630px;left:1px;width:383px;"><span class="l b">Brücke.rf6</span></div>
<div class="mi" style="top:652px;left:1px;width:383px;"><span class="l">Decke über EG.rf6</span></div>
<div class="mi" style="top:674px;left:1px;width:383px;"><span class="l">Decke über OG.rf6</span></div>
<div class="mi" style="top:696px;left:1px;width:383px;"><span class="l">2024-06-04_Stahlgerüst_fertig.rf6</span></div>
<div class="sep" style="left:6px;top:721px;width:375px"></div>
<div class="mi" style="top:725px;left:1px;width:383px;"><span class="l">Beenden</span><span class="s">Strg+Q</span></div>
</div>
<div class="menu" style="left:400px;top:604px;width:148px;height:321px">
<div class="mi" style="top:3px;left:2px;width:142px;"><span class="l" style="left:31px">ASF</span></div>
<div class="mi" style="top:25px;left:2px;width:142px;"><span class="l" style="left:31px">AutoCAD</span></div>
<div class="mi" style="top:47px;left:2px;width:142px;"><span class="l" style="left:31px">DXF</span></div>
<div class="mi" style="top:69px;left:2px;width:142px;"><span class="l" style="left:31px">DXF II</span></div>
<div class="mi" style="top:91px;left:2px;width:142px;"><span class="l" style="left:31px">glTF</span></div>
<div class="mi" style="top:113px;left:2px;width:142px;"><span class="l" style="left:31px">IFC</span></div>
<div class="mi" style="top:135px;left:2px;width:142px;"><span class="l" style="left:31px">SAF</span></div>
<div class="mi" style="top:157px;left:2px;width:142px;"><span class="l" style="left:31px">SDNF</span></div>
<div class="mi" style="top:179px;left:2px;width:142px;"><span class="l" style="left:31px">Tabellen</span></div>
<div class="mi" style="top:201px;left:2px;width:142px;"><span class="l" style="left:31px">VTK</span></div>
<div class="mi" style="top:223px;left:2px;width:142px;"><span class="l" style="left:31px">XML</span></div>
<div class="mi" style="top:245px;left:2px;width:142px;"><span class="l" style="left:31px">SVG</span></div>
<div class="sep" style="left:3px;top:270px;width:140px"></div>
<div class="mi" style="top:274px;left:2px;width:142px;background:#91c9f7;"><span class="l" style="left:31px">Python-Skript</span></div>
<div class="mi" style="top:296px;left:2px;width:142px;"><span class="l" style="left:31px">Vorschaubild</span></div>
</div>
<div class="abs" style="left:394px;top:873px;width:163px;height:33px;border:6px solid #05ab8c"></div>
<svg class="abs" style="left:0;top:0;pointer-events:none" width="1600" height="1200"><g transform="translate(21,54)"><path d="M6.5 2.5h8l3.5 3.5v12.5h-11.5z" fill="#fff" stroke="#444"/><path d="M5 11l5-4 7 3-3 4-5-2z" fill="#4a6fb5" stroke="#2a3f75" stroke-width=".6"/><path d="M5 0l1.2 3.3 3.5-.7-2.3 2.7 2.3 2.7-3.5-.7L5 10.6 3.8 7.3.3 8l2.3-2.7L.3 2.6l3.5.7z" fill="#f2e33a" stroke="#c9b400" stroke-width=".5"/></g><g transform="translate(21,76)"><path d="M1.5 6.5h6l1.5 1.5h9v10h-16.5z" fill="#f7e9a3" stroke="#cdb96a"/><path d="M13 9V4.5h-2.5l4-4 4 4H16V9z" fill="#0a9a3a"/></g><g transform="translate(21,98)"><path d="M1.5 6.5h6l1.5 1.5h9v10h-16.5z" fill="#f7e9a3" stroke="#cdb96a"/><path d="M13 0.5v4.5h-2.5l4 4 4-4H16V0.5z" fill="#e11"/></g><g transform="translate(21,127)"><path d="M2 3h14l2 2v13H2z" fill="#5a5a5a"/><rect x="5" y="4.5" width="9" height="6" fill="#f4f4f4"/><path d="M6 6.5h7M6 8.5h7" stroke="#5a5a5a" stroke-width=".9"/><rect x="6" y="13" width="6" height="5" fill="#f4f4f4"/></g><g transform="translate(21,149)"><g transform="translate(0,2) scale(.85)"><path d="M2 3h14l2 2v13H2z" fill="#5a5a5a"/><rect x="5" y="4.5" width="9" height="6" fill="#f4f4f4"/><path d="M6 6.5h7M6 8.5h7" stroke="#5a5a5a" stroke-width=".9"/><rect x="6" y="13" width="6" height="5" fill="#f4f4f4"/></g><path d="M9 11l7-9 2.5 2-7 9-3.5 1.5z" fill="#f5c46a" stroke="#a8701c" stroke-width=".7"/><path d="M16 2l1.2-1.5 2.5 2L18.5 4z" fill="#e99"/></g><g transform="translate(21,171)"><g transform="translate(0,3) scale(.85)"><path d="M2 3h14l2 2v13H2z" fill="#5a5a5a"/><rect x="5" y="4.5" width="9" height="6" fill="#f4f4f4"/><path d="M6 6.5h7M6 8.5h7" stroke="#5a5a5a" stroke-width=".9"/><rect x="6" y="13" width="6" height="5" fill="#f4f4f4"/></g><path d="M9 3l4-2 5 1v6l-4 2-5-1z" fill="#19b5e6"/><path d="M9 3l5 1 4-2M14 4v6M9 6l5 1 4-2M11.5 2.2v6.5" stroke="#bfeeff" stroke-width=".7" fill="none"/></g><g transform="translate(21,193)"><g transform="translate(0,3) scale(.85)"><path d="M2 3h14l2 2v13H2z" fill="#5a5a5a"/><rect x="5" y="4.5" width="9" height="6" fill="#f4f4f4"/><path d="M6 6.5h7M6 8.5h7" stroke="#5a5a5a" stroke-width=".9"/><rect x="6" y="13" width="6" height="5" fill="#f4f4f4"/></g><text x="16" y="8" font-size="9" font-family="Liberation Sans" fill="#333">1</text></g><g transform="translate(21,215)"><path d="M6 2h12v14" fill="none" stroke="#5a5a5a" stroke-width="1.3"/><path d="M4 4h12v14" fill="none" stroke="#5a5a5a" stroke-width="1.3"/><g transform="translate(0,5) scale(.8)"><path d="M2 3h14l2 2v13H2z" fill="#5a5a5a"/><rect x="5" y="4.5" width="9" height="6" fill="#f4f4f4"/><path d="M6 6.5h7M6 8.5h7" stroke="#5a5a5a" stroke-width=".9"/><rect x="6" y="13" width="6" height="5" fill="#f4f4f4"/></g></g><g transform="translate(21,244)"><rect x="2" y="4.5" width="16" height="11" rx="1" fill="#666"/><path d="M2.5 5l7.5 6 7.5-6" fill="none" stroke="#f4f4f4" stroke-width="1.2"/></g><g transform="translate(21,273)"><rect x="5" y="2" width="10" height="4" fill="#555"/><rect x="2" y="6.5" width="16" height="8" rx="1.5" fill="#555"/><rect x="5" y="11" width="10" height="7" fill="#f4f4f4" stroke="#555"/><path d="M7 13.5h6M7 15.5h6" stroke="#555" stroke-width=".8"/></g><g transform="translate(21,295)"><g transform="translate(0,1) scale(.5)"><rect x="5" y="1" width="10" height="5" fill="#555"/><rect x="1" y="6" width="18" height="9" rx="1.5" fill="#555"/><rect x="5" y="11" width="10" height="7" fill="#f4f4f4" stroke="#555"/></g><path d="M7.5 5.5h7l3 3v10h-10z" fill="#fff" stroke="#444"/><path d="M9.5 11.5h6M9.5 13.5h6M9.5 15.5h6" stroke="#444" stroke-width=".8"/></g><g transform="translate(21,317)"><g transform="translate(0,1) scale(.5)"><rect x="5" y="1" width="10" height="5" fill="#555"/><rect x="1" y="6" width="18" height="9" rx="1.5" fill="#555"/><rect x="5" y="11" width="10" height="7" fill="#f4f4f4" stroke="#555"/></g><path d="M7.5 5.5h7l3 3v10h-10z" fill="#fff" stroke="#444"/><path d="M10 16q3-1 3-6 0 5 4 5-4 0-7 1z" fill="none" stroke="#e11" stroke-width=".9"/></g><g transform="translate(21,339)"><g transform="translate(0,1) scale(.5)"><rect x="5" y="1" width="10" height="5" fill="#555"/><rect x="1" y="6" width="18" height="9" rx="1.5" fill="#555"/><rect x="5" y="11" width="10" height="7" fill="#f4f4f4" stroke="#555"/></g><path d="M7.5 5.5h7l3 3v10h-10z" fill="#fff" stroke="#444"/><circle cx="12.5" cy="14" r="2.8" fill="#e11"/><circle cx="12.5" cy="14" r="1" fill="#fff"/></g><g transform="translate(21,361)"><g transform="translate(0,1) scale(.5)"><rect x="5" y="1" width="10" height="5" fill="#555"/><rect x="1" y="6" width="18" height="9" rx="1.5" fill="#555"/><rect x="5" y="11" width="10" height="7" fill="#f4f4f4" stroke="#555"/></g><rect x="7.5" y="8" width="10" height="10.5" fill="#fff" stroke="#444"/><rect x="10.5" y="6" width="4" height="3" fill="#fff" stroke="#444"/><path d="M9.5 12.5h6M9.5 15h6" stroke="#444" stroke-width=".8"/></g><g transform="translate(21,383)"><g transform="translate(0,1) scale(.5)"><rect x="5" y="1" width="10" height="5" fill="#555"/><rect x="1" y="6" width="18" height="9" rx="1.5" fill="#555"/><rect x="5" y="11" width="10" height="7" fill="#f4f4f4" stroke="#555"/></g><path d="M7.5 5.5h7l3 3v10h-10z" fill="#fff" stroke="#444"/><rect x="8" y="12" width="8" height="5" fill="#1a8a4a"/><path d="M9.5 14.5h5M12 13v3" stroke="#fff" stroke-width=".8"/></g><g transform="translate(21,412)"><path d="M4.5 2.5h8l4 4v12h-12z" fill="#fff" stroke="#444"/><path d="M6.5 8.5h8M6.5 11h8M6.5 13.5h8M6.5 16h8" stroke="#444" stroke-width=".8"/><g transform="translate(-1,-1) scale(.8)"><path d="M5 0l1.2 3.3 3.5-.7-2.3 2.7 2.3 2.7-3.5-.7L5 10.6 3.8 7.3.3 8l2.3-2.7L.3 2.6l3.5.7z" fill="#f2e33a" stroke="#c9b400" stroke-width=".5"/></g></g><g transform="translate(21,434)"><path d="M4.5 2.5h8l4 4v12h-12z" fill="#fff" stroke="#444"/><path d="M6.5 8.5h8M6.5 11h8M6.5 13.5h8M6.5 16h8" stroke="#444" stroke-width=".8"/></g><g transform="translate(21,463)"><path d="M3 3h9l5 5v9H3z" fill="#19b5e6"/><path d="M13 8.5a3.5 3.5 0 1 0 0 4" fill="none" stroke="#fff" stroke-width="1.8"/></g><g transform="translate(21,485)"><path d="M1 3h7l2 2v10H1z" fill="#19b5e6"/><g transform="translate(3,3) scale(.85)"><path d="M10 1l7.5 4v9L10 18.5 2.5 14V5z" fill="#19b5e6"/><path d="M10 5.5l4.5 2.5v5L10 15.5 5.5 13V8z M10 10.5V15.5M10 10.5L5.5 8M10 10.5L14.5 8M7.5 6.7L12.2 9.3M12.5 6.7L7.8 9.3M5.5 10.5l4.5 2.5 4.5-2.5" fill="none" stroke="#e8f8ff" stroke-width=".9"/></g></g><g transform="translate(21,507)"><g transform="translate(0,4) scale(.8)"><path d="M2 3h14l2 2v13H2z" fill="#5a5a5a"/><rect x="5" y="4.5" width="9" height="6" fill="#f4f4f4"/><path d="M6 6.5h7M6 8.5h7" stroke="#5a5a5a" stroke-width=".9"/><rect x="6" y="13" width="6" height="5" fill="#f4f4f4"/></g><g transform="translate(7,-1) scale(.65)"><path d="M10 1l7.5 4v9L10 18.5 2.5 14V5z" fill="#19b5e6"/><path d="M10 5.5l4.5 2.5v5L10 15.5 5.5 13V8z M10 10.5V15.5M10 10.5L5.5 8M10 10.5L14.5 8M7.5 6.7L12.2 9.3M12.5 6.7L7.8 9.3M5.5 10.5l4.5 2.5 4.5-2.5" fill="none" stroke="#e8f8ff" stroke-width=".9"/></g></g><g transform="translate(21,529)"><path d="M1 3h7l2 2v10H1z" fill="#19b5e6"/><g transform="translate(3,3) scale(.85)"><path d="M10 1l7.5 4v9L10 18.5 2.5 14V5z" fill="#19b5e6"/><path d="M10 5.5l4.5 2.5v5L10 15.5 5.5 13V8z M10 10.5V15.5M10 10.5L5.5 8M10 10.5L14.5 8M7.5 6.7L12.2 9.3M12.5 6.7L7.8 9.3M5.5 10.5l4.5 2.5 4.5-2.5" fill="none" stroke="#e8f8ff" stroke-width=".9"/></g></g><g transform="translate(21,551)"><g transform="translate(0,2)"><path d="M1.5 6.5h6l1.5 1.5h9v10h-16.5z" fill="#f7e9a3" stroke="#cdb96a"/></g><g transform="translate(4,-1) scale(.65)"><path d="M10 1l7.5 4v9L10 18.5 2.5 14V5z" fill="#19b5e6"/><path d="M10 5.5l4.5 2.5v5L10 15.5 5.5 13V8z M10 10.5V15.5M10 10.5L5.5 8M10 10.5L14.5 8M7.5 6.7L12.2 9.3M12.5 6.7L7.8 9.3M5.5 10.5l4.5 2.5 4.5-2.5" fill="none" stroke="#e8f8ff" stroke-width=".9"/></g></g><g transform="translate(21,580)"><rect x="2.5" y="5.5" width="15" height="12" fill="#e8e8e8" stroke="#555"/><path d="M4.5 10h11M4.5 12.5h11M4.5 15h11" stroke="#555" stroke-width=".8"/><path d="M7 6V3.5h6V6" fill="#c98" stroke="#555"/><path d="M2.5 5.5l3-2 2 2" fill="#f7e9a3" stroke="#555" stroke-width=".7"/></g><path d="M391 615l4 3.5-4 3.5zM391 637l4 3.5-4 3.5z" fill="#111"/><path d="M25.5 670l2.5 3 4.5-6" fill="none" stroke="#111" stroke-width="1.8"/><g transform="translate(21,777)"><path d="M9 3l8-2v17l-8 2z" fill="#ddd" stroke="#555"/><path d="M9 3v16" stroke="#555" stroke-width="1.2"/><circle cx="11.5" cy="11" r=".9" fill="#333"/><path d="M1 10h6M5 7.5l2.5 2.5L5 12.5" fill="none" stroke="#333" stroke-width="1.4"/></g><g transform="translate(404,609)"><path d="M5.5 2.5h8l3 3v13h-11z" fill="#fff" stroke="#666" stroke-width=".9"/><rect x="1.5" y="3.5" width="14" height="8.5" fill="#a64ed0"/><text x="2" y="10.8" font-size="7.6" font-weight="bold" fill="#fff" font-family="Liberation Sans" letter-spacing="-.55" textLength="13" lengthAdjust="spacingAndGlyphs">ASF</text><path d="M8.5 14.5h4.5l-2.250 2.5z" fill="#a64ed0"/></g><g transform="translate(404,631)"><rect x="2.5" y="2.5" width="15" height="13" fill="#fff" stroke="#555"/><text x="5.5" y="13.5" font-size="12" font-weight="bold" fill="#d42027" font-family="Liberation Sans">A</text><path d="M7.5 16h5l-2.5 3z" fill="#d42027"/></g><g transform="translate(404,653)"><path d="M5.5 2.5h8l3 3v13h-11z" fill="#fff" stroke="#666" stroke-width=".9"/><rect x="1.5" y="3.5" width="14" height="8.5" fill="#c8324a"/><text x="2" y="10.8" font-size="7.6" font-weight="bold" fill="#fff" font-family="Liberation Sans" letter-spacing="-.55" textLength="13" lengthAdjust="spacingAndGlyphs">DXF</text><path d="M8.5 14.5h4.5l-2.250 2.5z" fill="#c8324a"/></g><g transform="translate(404,675)"><path d="M5.5 2.5h8l3 3v13h-11z" fill="#fff" stroke="#666" stroke-width=".9"/><rect x="1.5" y="3.5" width="14" height="8.5" fill="#c8324a"/><text x="2" y="10.8" font-size="7.6" font-weight="bold" fill="#fff" font-family="Liberation Sans" letter-spacing="-.55" textLength="13" lengthAdjust="spacingAndGlyphs">DXF</text><path d="M8.5 14.5h4.5l-2.250 2.5z" fill="#c8324a"/></g><g transform="translate(404,697)"><path d="M4.5 1.5h9l3 3v14h-12z" fill="#fff" stroke="#555"/><path d="M10 5l4 2.3v4.6L10 14.2 6 11.9V7.3z" fill="#8bd06a" stroke="#3a9a2a" stroke-width=".8"/><circle cx="10" cy="9.6" r="1.4" fill="#fff"/></g><g transform="translate(404,719)"><path d="M4.5 1.5h9l3 3v14h-12z" fill="#fff" stroke="#555"/><path d="M7 4a5 5 0 1 0 0 10" fill="none" stroke="#3a4ac0" stroke-width="1.7"/><path d="M9 5a4 4 0 1 0 0 8" fill="none" stroke="#e0305a" stroke-width="1.5"/><path d="M9 14.5l5 2.5" stroke="#19a7c9" stroke-width="1.3"/></g><g transform="translate(404,741)"><path d="M5.5 2.5h8l3 3v13h-11z" fill="#fff" stroke="#666" stroke-width=".9"/><rect x="1.5" y="3.5" width="14" height="8.5" fill="#1a7a3a"/><text x="2" y="10.8" font-size="7.6" font-weight="bold" fill="#fff" font-family="Liberation Sans" letter-spacing="-.55" textLength="13" lengthAdjust="spacingAndGlyphs">SAF</text><path d="M8.5 14.5h4.5l-2.250 2.5z" fill="#1a7a3a"/></g><g transform="translate(404,785)"><path d="M5.5 2.5h8l3 3v13h-11z" fill="#fff" stroke="#666" stroke-width=".9"/><rect x="1.5" y="3.5" width="14" height="8.5" fill="#7aa870"/><text x="2" y="10.8" font-size="7.6" font-weight="bold" fill="#fff" font-family="Liberation Sans" letter-spacing="-.55" textLength="13" lengthAdjust="spacingAndGlyphs">X#</text><path d="M8.5 14.5h4.5l-2.250 2.5z" fill="#7aa870"/></g><g transform="translate(404,807)"><path d="M5.5 2.5h8l3 3v13h-11z" fill="#fff" stroke="#666" stroke-width=".9"/><rect x="1.5" y="3.5" width="14" height="8.5" fill="#2aa84a"/><text x="2" y="10.8" font-size="7.6" font-weight="bold" fill="#fff" font-family="Liberation Sans" letter-spacing="-.55" textLength="13" lengthAdjust="spacingAndGlyphs">VTK</text><path d="M8.5 14.5h4.5l-2.250 2.5z" fill="#2aa84a"/></g><g transform="translate(404,829)"><path d="M5.5 2.5h8l3 3v13h-11z" fill="#fff" stroke="#666" stroke-width=".9"/><rect x="1.5" y="3.5" width="14" height="8.5" fill="#f29a1a"/><text x="2" y="10.8" font-size="7.6" font-weight="bold" fill="#fff" font-family="Liberation Sans" letter-spacing="-.55" textLength="13" lengthAdjust="spacingAndGlyphs">XML</text><path d="M8.5 14.5h4.5l-2.250 2.5z" fill="#f29a1a"/></g><g transform="translate(404,851)"><path d="M5.5 2.5h8l3 3v13h-11z" fill="#fff" stroke="#666" stroke-width=".9"/><rect x="1.5" y="3.5" width="14" height="8.5" fill="#111"/><text x="2" y="10.8" font-size="7.6" font-weight="bold" fill="#fff" font-family="Liberation Sans" letter-spacing="-.55" textLength="13" lengthAdjust="spacingAndGlyphs">SVG</text><path d="M8.5 14.5h4.5l-2.250 2.5z" fill="#111"/></g><g transform="translate(404,880)"><path d="M9.8 2c-3 0-3.3 1.3-3.3 2.5V6.5h3.7v.8H4.8C3 7.3 2 8.5 2 10.5s1 3.2 2.5 3.2h1.8v-2c0-1.5 1.2-2.7 2.7-2.7h3.3c1.2 0 2.2-1 2.2-2.2V4.5C14.5 3 13 2 9.8 2z" fill="#3a76ad"/><circle cx="8" cy="4.2" r=".8" fill="#fff"/><path d="M10.2 18c3 0 3.3-1.3 3.3-2.5v-2H9.8v-.8h5.4c1.8 0 2.8-1.2 2.8-3.2s-1-3.2-2.5-3.2h-1.8v2c0 1.5-1.2 2.7-2.7 2.7H7.7c-1.2 0-2.2 1-2.2 2.2v2.3C5.5 17 7 18 10.2 18z" fill="#ffd140"/><circle cx="12" cy="15.8" r=".8" fill="#fff"/></g><g transform="translate(404,902)"><rect x="2.5" y="1.5" width="14" height="10" fill="#fff" stroke="#555"/><rect x="6" y="3.5" width="7" height="6" fill="#8aa8e0"/><path d="M4.5 11.5v7h11v-7" fill="#fff" stroke="#555"/><path d="M7.5 14h5l-2.5 3z" fill="#3a5ab0"/></g></svg>
<div id="frame" class="abs"></div>
<div class="abs" id="navy" style="left:1599px;top:8px;width:1px;height:75px;background:#2c3e6e;z-index:60"></div>
</body></html>
